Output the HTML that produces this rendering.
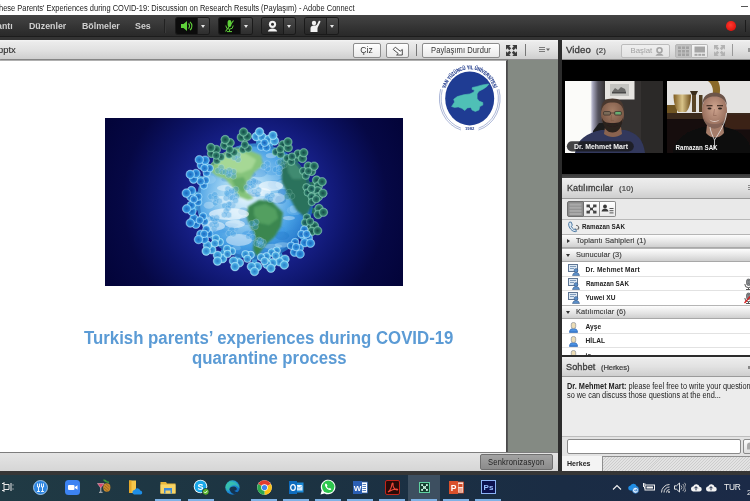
<!DOCTYPE html>
<html><head><meta charset="utf-8">
<style>
*{box-sizing:border-box;margin:0;padding:0}
html,body{width:750px;height:501px;overflow:hidden;background:#2a2a2a;font-family:"Liberation Sans","DejaVu Sans",sans-serif;}
.abs{position:absolute}
#root{will-change:transform;transform:translateZ(0);position:relative;width:750px;height:501px;overflow:hidden;background:#2c2c2c}
#title{left:0;top:0;width:750px;height:15px;background:#fff;color:#1a1a1a;font-size:8.4px;line-height:14px;white-space:nowrap}
#menu{left:0;top:15px;width:750px;height:22px;background:linear-gradient(#434343 0,#3a3a3a 35%,#2e2e2e 75%,#282828 100%);}
.mi{position:absolute;top:0;line-height:21px;font-size:9.4px;font-weight:bold;color:#cfcfcf;white-space:nowrap;transform-origin:0 50%;transform:scaleX(0.94)}
.mb{position:absolute;top:3px;height:16px;width:21px;background:#0c0c0c;border-radius:2px 0 0 2px;box-shadow:0 0 0 1px #1a1a1a}
.md{position:absolute;top:3px;height:16px;width:11px;background:linear-gradient(#4a4a4a,#2e2e2e);border-radius:0 2px 2px 0;box-shadow:0 0 0 1px #1a1a1a}
.md:after{content:"";position:absolute;left:3px;top:7px;border:2.5px solid transparent;border-top:3px solid #e8e8e8}
.tb{position:absolute;top:40px;height:20px;background:linear-gradient(#f4f4f4 0,#ebebeb 12%,#e2e2e2 50%,#cecece 100%);border-bottom:1px solid #8e8e8e}
.btn{position:absolute;border:1px solid #8c8c8c;border-radius:2px;background:linear-gradient(#ffffff,#e9e9e9);font-size:8.6px;color:#333;text-align:center;white-space:nowrap}
.sep{position:absolute;width:1px;background:#777}
.pt{position:absolute;font-size:9.600px;color:#3a3a3a;white-space:nowrap;line-height:19px;top:-0.500px;letter-spacing:0.100px;-webkit-text-stroke:0.300px #3a3a3a;transform-origin:0 50%}
.pc{position:absolute;font-size:7.800px;font-weight:normal;-webkit-text-stroke:0.200px #444;letter-spacing:0.200px;color:#444;white-space:nowrap;line-height:19px;top:0.500px}
.row{position:absolute;left:0;width:188px;height:14px;font-size:6.600px;font-weight:bold;color:#222;line-height:14.500px;white-space:nowrap}
.row span{position:absolute;left:23.500px;top:0;letter-spacing:0.050px;transform-origin:0 50%}
.grp{position:absolute;left:0;width:188px;height:14px;background:linear-gradient(#fdfdfd,#e3e3e3 60%,#cfcfcf);border-top:1px solid #b5b5b5;border-bottom:1px solid #a8a8a8;font-size:7.900px;color:#3c3c3c;line-height:12.500px;white-space:nowrap;letter-spacing:0.100px;-webkit-text-stroke:0.150px #3c3c3c}
.grp span{position:absolute;left:14px;top:0;transform-origin:0 50%;transform:scaleX(0.940)}
</style></head><body>
<div id="root">

<!-- title -->
<div id="title" class="abs"><span class="abs" id="ttext" style="left:-1px;top:1px;transform-origin:0 0;transform:scaleX(0.893)">hese Parents' Experiences during COVID-19: Discussion on Research Results (Paylaşım) - Adobe Connect</span>
<div class="abs" style="left:741px;top:6px;width:7px;height:1px;background:#555"></div></div>
<!-- menu -->
<div id="menu" class="abs">
<span class="mi" style="left:-3px">antı</span>
<span class="mi" style="left:29px">Düzenler</span>
<span class="mi" style="left:82px">Bölmeler</span>
<span class="mi" style="left:135px">Ses</span>
<div class="abs" style="left:164px;top:4px;width:1px;height:14px;background:#222;box-shadow:1px 0 0 #3a3a3a"></div>
<!-- speaker -->
<div class="mb" style="left:176px"><svg width="21" height="16" viewBox="0 0 21 16"><path d="M5 6h2.5l3.5-3v10l-3.5-3H5z" fill="#5fd13a"/><path d="M12.5 5.5a3.5 3.5 0 0 1 0 5M14 3.8a5.6 5.6 0 0 1 0 8.4" fill="none" stroke="#5fd13a" stroke-width="1.1"/></svg></div><div class="md" style="left:198px"></div>
<!-- mic -->
<div class="mb" style="left:219px"><svg width="21" height="16" viewBox="0 0 21 16"><rect x="8.6" y="2" width="3.8" height="7" rx="1.9" fill="#5fd13a"/><path d="M6.8 7.5a3.7 3.7 0 0 0 7.4 0M10.5 11.3v2M8 13.6h5" fill="none" stroke="#5fd13a" stroke-width="1"/><path d="M6.5 13.5L14.5 2.5" stroke="#5fd13a" stroke-width="1.1"/></svg></div><div class="md" style="left:241px"></div>
<!-- webcam -->
<div class="mb" style="left:262px;background:linear-gradient(#3d3d3d,#272727)"><svg width="21" height="16" viewBox="0 0 21 16"><circle cx="10.5" cy="6.3" r="3.6" fill="#f2f2f2"/><circle cx="10.5" cy="6.3" r="1.5" fill="#2c2c2c"/><path d="M5.8 13.4 C6.6 11.4 8.2 10.6 10.5 10.6 C12.8 10.6 14.4 11.4 15.2 13.4 Z" fill="#f2f2f2"/></svg></div><div class="md" style="left:284px"></div>
<!-- hand -->
<div class="mb" style="left:305px;background:linear-gradient(#3d3d3d,#272727)"><svg width="21" height="16" viewBox="0 0 21 16"><circle cx="9" cy="5" r="2.2" fill="#f2f2f2"/><path d="M5.5 14 V10.5 C5.5 8.5 7 7.6 9 7.6 C10.5 7.600 11.4 7.600 12.200 6.200 L14 2.600 L15.600 3.400 L13.600 7.800 C13 9 12.500 9.600 12.500 11 V14 Z" fill="#f2f2f2"/></svg></div><div class="md" style="left:327px"></div>
<div class="abs" style="left:745px;top:4.500px;width:1px;height:12.500px;background:#1b1b1b"></div>
<div class="abs" style="left:726px;top:6px;width:9.600px;height:9.600px;border-radius:50%;background:radial-gradient(circle at 45% 40%,#ff3b30,#e01510 70%,#b80d0a)"></div>
</div>
<div class="abs" style="left:0;top:36px;width:750px;height:1px;background:#1c1c1c"></div><div class="abs" style="left:0;top:37px;width:750px;height:3px;background:#343434"></div>

<!-- share pod -->
<div class="tb" style="left:0;width:558px">
<span class="abs" style="left:-2px;top:0;line-height:20px;font-size:9.400px;color:#333;-webkit-text-stroke:0.150px #333">pptx</span>
<div class="btn" style="left:352.500px;top:3px;width:28px;height:15px;line-height:13px">Çiz</div>
<div class="btn" style="left:386px;top:3px;width:23px;height:15px"><svg width="21" height="13" viewBox="0 0 21 13" style="display:block"><path d="M6.200 5.400 L8.300 3.200 L13.200 7.200 L15.300 5.500 L15.300 11 L9.600 11 L11.300 9.500 Z" fill="#fdfdfd" stroke="#3a3a3a" stroke-width="0.900" stroke-linejoin="round"/></svg></div>
<div class="sep" style="left:416px;top:4px;height:12px"></div>
<div class="btn" style="left:422px;top:3px;width:78px;height:15px;line-height:13px;"><span style="display:inline-block;transform:scaleX(0.880);transform-origin:50% 50%;margin:0 -6px;letter-spacing:0.100px">Paylaşımı Durdur</span></div>
<svg class="abs" style="left:506px;top:5px" width="11" height="11" viewBox="0 0 11 11"><g fill="#3c3c3c"><path d="M0 0h4.700L3.300 1.400 5.200 3.300 3.300 5.200 1.400 3.300 0 4.700z"/><path d="M11 0v4.700L9.600 3.300 7.700 5.200 5.800 3.300 7.700 1.400 6.300 0z"/><path d="M0 11V6.300l1.400 1.400L3.300 5.800 5.200 7.700 3.300 9.600 4.700 11z"/><path d="M11 11H6.300l1.400-1.400L5.800 7.700 7.700 5.800 9.600 7.700 11 6.300z"/></g></svg>
<div class="sep" style="left:525px;top:4px;height:12px"></div>
<svg class="abs" style="left:539px;top:7px" width="11" height="6" viewBox="0 0 11 6"><path d="M0 0.500h6M0 2.500h6M0 4.500h6" stroke="#7a7a7a" stroke-width="1"/><path d="M7 1.500h4L9 4z" fill="#666"/></svg>
</div>
<div class="abs" id="slide" style="left:0;top:60px;width:507px;height:392px;border-top:1px solid #b0b0b0;background:#fff;border-right:1px solid #4a4a4a;box-shadow:1px 0 1px #555"></div>
<div class="abs" style="left:508px;top:60px;width:50px;height:392px;background:#848a83"></div>
<div class="abs" style="left:0;top:452px;width:558px;height:19px;background:linear-gradient(#e4e4e4,#d6d6d6);border-top:1px solid #7d7d7d"></div>
<div class="abs" style="left:480px;top:454px;width:73px;height:15.500px;border:1px solid #6f6f6f;border-radius:2px;background:linear-gradient(#a3a3a3,#8b8b8b);font-size:8.400px;color:#1e1e1e;text-align:center;line-height:14px"><span style="display:inline-block;transform:scaleX(0.900);margin:0 -6px;letter-spacing:0.200px">Senkronizasyon</span></div>
<!-- slide content -->
<div class="abs" id="st1" style="left:84px;top:328.400px;transform:scaleX(0.955);font-size:17.600px;font-weight:bold;color:#5b9bd5;white-space:nowrap;transform-origin:0 0;line-height:20px">Turkish parents’ experiences during COVID-19</div>
<div class="abs" id="st2" style="left:191.500px;top:348.300px;transform:scaleX(0.953);font-size:17.600px;font-weight:bold;color:#5b9bd5;white-space:nowrap;transform-origin:0 0;line-height:20px">quarantine process</div>

<svg class="abs" style="left:105px;top:118px" width="298" height="168" viewBox="0 0 298 168">
<defs>
<radialGradient id="vbg" gradientUnits="userSpaceOnUse" cx="149.9" cy="83.5" r="165"><stop offset="0" stop-color="#2636a6"/><stop offset="0.4" stop-color="#172088"/><stop offset="0.6" stop-color="#0c1366"/><stop offset="0.8" stop-color="#060845"/><stop offset="1" stop-color="#03043a"/></radialGradient>
<radialGradient id="glb" cx="42%" cy="45%" r="62%"><stop offset="0" stop-color="#e8f6fd"/><stop offset="0.3" stop-color="#a9d8f4"/><stop offset="0.7" stop-color="#469fe4"/><stop offset="1" stop-color="#1f6fc6"/></radialGradient>
<radialGradient id="spb" cx="50%" cy="50%" r="55%"><stop offset="0" stop-color="#1c66bc"/><stop offset="0.6" stop-color="#2f8fdc"/><stop offset="1" stop-color="#86d6ff"/></radialGradient>
<radialGradient id="spg" cx="50%" cy="50%" r="55%"><stop offset="0" stop-color="#154a48"/><stop offset="0.6" stop-color="#2c7a68"/><stop offset="1" stop-color="#7cc8a8"/></radialGradient>
<radialGradient id="spc" cx="50%" cy="50%" r="55%"><stop offset="0" stop-color="#2a7cc8"/><stop offset="0.6" stop-color="#45a8e0"/><stop offset="1" stop-color="#a8ecff"/></radialGradient>
<clipPath id="gc"><circle cx="149.9" cy="83.5" r="58"/></clipPath>
<filter id="vb" x="-5%" y="-5%" width="110%" height="110%"><feGaussianBlur stdDeviation="0.55"/></filter>
<filter id="vb3" x="-10%" y="-10%" width="120%" height="120%"><feGaussianBlur stdDeviation="1.1"/></filter>
</defs>
<rect width="298" height="168" fill="url(#vbg)"/>
<g filter="url(#vb)">
<line x1="205.2" y1="92.2" x2="212.0" y2="93.3" stroke="#256b5c" stroke-width="5.5" stroke-linecap="round"/>
<circle cx="214.0" cy="90.5" r="4.3" fill="url(#spg)" stroke="#8fd0bc" stroke-width="0.6" stroke-opacity="0.7" opacity="1.0"/><circle cx="213.1" cy="96.5" r="4.3" fill="url(#spg)" stroke="#8fd0bc" stroke-width="0.6" stroke-opacity="0.7" opacity="1.0"/><circle cx="218.4" cy="94.3" r="4.3" fill="url(#spg)" stroke="#8fd0bc" stroke-width="0.6" stroke-opacity="0.7" opacity="1.0"/>
<line x1="200.7" y1="107.1" x2="206.7" y2="109.9" stroke="#256b5c" stroke-width="5.5" stroke-linecap="round"/>
<circle cx="209.4" cy="107.8" r="4.3" fill="url(#spg)" stroke="#8fd0bc" stroke-width="0.6" stroke-opacity="0.7" opacity="1.0"/><circle cx="206.8" cy="113.4" r="4.3" fill="url(#spg)" stroke="#8fd0bc" stroke-width="0.6" stroke-opacity="0.7" opacity="1.0"/><circle cx="212.6" cy="112.7" r="4.3" fill="url(#spg)" stroke="#8fd0bc" stroke-width="0.6" stroke-opacity="0.7" opacity="1.0"/>
<line x1="194.7" y1="117.1" x2="200.3" y2="121.3" stroke="#3d9ad8" stroke-width="5.5" stroke-linecap="round"/>
<circle cx="203.3" cy="119.8" r="4.3" fill="url(#spb)" stroke="#bdeafc" stroke-width="0.6" stroke-opacity="0.7" opacity="1.0"/><circle cx="199.7" cy="124.7" r="4.3" fill="url(#spb)" stroke="#bdeafc" stroke-width="0.6" stroke-opacity="0.7" opacity="1.0"/><circle cx="205.4" cy="125.2" r="4.3" fill="url(#spb)" stroke="#bdeafc" stroke-width="0.6" stroke-opacity="0.7" opacity="1.0"/>
<line x1="186.4" y1="125.9" x2="190.9" y2="131.1" stroke="#3d9ad8" stroke-width="5.5" stroke-linecap="round"/>
<circle cx="194.2" cy="130.3" r="4.3" fill="url(#spb)" stroke="#bdeafc" stroke-width="0.6" stroke-opacity="0.7" opacity="1.0"/><circle cx="189.6" cy="134.2" r="4.3" fill="url(#spb)" stroke="#bdeafc" stroke-width="0.6" stroke-opacity="0.7" opacity="1.0"/><circle cx="195.1" cy="136.0" r="4.3" fill="url(#spb)" stroke="#bdeafc" stroke-width="0.6" stroke-opacity="0.7" opacity="1.0"/>
<line x1="173.4" y1="134.3" x2="176.6" y2="141.1" stroke="#3d9ad8" stroke-width="5.5" stroke-linecap="round"/>
<circle cx="180.0" cy="141.2" r="4.3" fill="url(#spc)" stroke="#bdeafc" stroke-width="0.6" stroke-opacity="0.7" opacity="1.0"/><circle cx="174.5" cy="143.8" r="4.3" fill="url(#spc)" stroke="#bdeafc" stroke-width="0.6" stroke-opacity="0.7" opacity="1.0"/><circle cx="179.3" cy="147.0" r="4.3" fill="url(#spc)" stroke="#bdeafc" stroke-width="0.6" stroke-opacity="0.7" opacity="1.0"/>
<line x1="162.9" y1="138.0" x2="164.4" y2="144.0" stroke="#3d9ad8" stroke-width="5.5" stroke-linecap="round"/>
<circle cx="167.7" cy="144.9" r="4.3" fill="url(#spc)" stroke="#bdeafc" stroke-width="0.6" stroke-opacity="0.7" opacity="1.0"/><circle cx="161.8" cy="146.3" r="4.3" fill="url(#spc)" stroke="#bdeafc" stroke-width="0.6" stroke-opacity="0.7" opacity="1.0"/><circle cx="165.9" cy="150.3" r="4.3" fill="url(#spc)" stroke="#bdeafc" stroke-width="0.6" stroke-opacity="0.7" opacity="1.0"/>
<line x1="149.5" y1="139.5" x2="149.5" y2="147.0" stroke="#3d9ad8" stroke-width="5.5" stroke-linecap="round"/>
<circle cx="152.5" cy="148.6" r="4.3" fill="url(#spc)" stroke="#bdeafc" stroke-width="0.6" stroke-opacity="0.7" opacity="1.0"/><circle cx="146.4" cy="148.6" r="4.3" fill="url(#spc)" stroke="#bdeafc" stroke-width="0.6" stroke-opacity="0.7" opacity="1.0"/><circle cx="149.5" cy="153.5" r="4.3" fill="url(#spc)" stroke="#bdeafc" stroke-width="0.6" stroke-opacity="0.7" opacity="1.0"/>
<line x1="133.5" y1="137.1" x2="131.9" y2="142.4" stroke="#3d9ad8" stroke-width="5.5" stroke-linecap="round"/>
<circle cx="134.4" cy="144.8" r="4.3" fill="url(#spc)" stroke="#bdeafc" stroke-width="0.6" stroke-opacity="0.7" opacity="1.0"/><circle cx="128.5" cy="143.0" r="4.3" fill="url(#spc)" stroke="#bdeafc" stroke-width="0.6" stroke-opacity="0.7" opacity="1.0"/><circle cx="130.0" cy="148.6" r="4.3" fill="url(#spc)" stroke="#bdeafc" stroke-width="0.6" stroke-opacity="0.7" opacity="1.0"/>
<line x1="120.1" y1="130.9" x2="115.9" y2="137.6" stroke="#3d9ad8" stroke-width="5.5" stroke-linecap="round"/>
<circle cx="117.6" cy="140.6" r="4.3" fill="url(#spc)" stroke="#bdeafc" stroke-width="0.6" stroke-opacity="0.7" opacity="1.0"/><circle cx="112.5" cy="137.3" r="4.3" fill="url(#spc)" stroke="#bdeafc" stroke-width="0.6" stroke-opacity="0.7" opacity="1.0"/><circle cx="112.5" cy="143.1" r="4.3" fill="url(#spc)" stroke="#bdeafc" stroke-width="0.6" stroke-opacity="0.7" opacity="1.0"/>
<line x1="110.7" y1="123.5" x2="105.7" y2="128.5" stroke="#3d9ad8" stroke-width="5.5" stroke-linecap="round"/>
<circle cx="106.8" cy="131.7" r="4.3" fill="url(#spc)" stroke="#bdeafc" stroke-width="0.6" stroke-opacity="0.7" opacity="1.0"/><circle cx="102.5" cy="127.4" r="4.3" fill="url(#spc)" stroke="#bdeafc" stroke-width="0.6" stroke-opacity="0.7" opacity="1.0"/><circle cx="101.2" cy="133.1" r="4.3" fill="url(#spc)" stroke="#bdeafc" stroke-width="0.6" stroke-opacity="0.7" opacity="1.0"/>
<line x1="103.4" y1="114.8" x2="98.8" y2="117.9" stroke="#3d9ad8" stroke-width="5.5" stroke-linecap="round"/>
<circle cx="99.3" cy="121.3" r="4.3" fill="url(#spb)" stroke="#bdeafc" stroke-width="0.6" stroke-opacity="0.7" opacity="1.0"/><circle cx="95.9" cy="116.2" r="4.3" fill="url(#spb)" stroke="#bdeafc" stroke-width="0.6" stroke-opacity="0.7" opacity="1.0"/><circle cx="93.5" cy="121.5" r="4.3" fill="url(#spb)" stroke="#bdeafc" stroke-width="0.6" stroke-opacity="0.7" opacity="1.0"/>
<line x1="96.8" y1="101.2" x2="91.4" y2="103.0" stroke="#3d9ad8" stroke-width="5.5" stroke-linecap="round"/>
<circle cx="90.9" cy="106.3" r="4.3" fill="url(#spb)" stroke="#bdeafc" stroke-width="0.6" stroke-opacity="0.7" opacity="1.0"/><circle cx="89.0" cy="100.5" r="4.3" fill="url(#spb)" stroke="#bdeafc" stroke-width="0.6" stroke-opacity="0.7" opacity="1.0"/><circle cx="85.3" cy="105.0" r="4.3" fill="url(#spb)" stroke="#bdeafc" stroke-width="0.6" stroke-opacity="0.7" opacity="1.0"/>
<line x1="94.2" y1="89.4" x2="88.1" y2="90.1" stroke="#3d9ad8" stroke-width="5.5" stroke-linecap="round"/>
<circle cx="86.9" cy="93.3" r="4.3" fill="url(#spb)" stroke="#bdeafc" stroke-width="0.6" stroke-opacity="0.7" opacity="1.0"/><circle cx="86.3" cy="87.2" r="4.3" fill="url(#spb)" stroke="#bdeafc" stroke-width="0.6" stroke-opacity="0.7" opacity="1.0"/><circle cx="81.7" cy="90.8" r="4.3" fill="url(#spb)" stroke="#bdeafc" stroke-width="0.6" stroke-opacity="0.7" opacity="1.0"/>
<line x1="94.3" y1="76.7" x2="87.7" y2="75.8" stroke="#3d9ad8" stroke-width="5.5" stroke-linecap="round"/>
<circle cx="85.8" cy="78.7" r="4.3" fill="url(#spb)" stroke="#bdeafc" stroke-width="0.6" stroke-opacity="0.7" opacity="1.0"/><circle cx="86.5" cy="72.6" r="4.3" fill="url(#spb)" stroke="#bdeafc" stroke-width="0.6" stroke-opacity="0.7" opacity="1.0"/><circle cx="81.3" cy="75.1" r="4.3" fill="url(#spb)" stroke="#bdeafc" stroke-width="0.6" stroke-opacity="0.7" opacity="1.0"/>
<line x1="98.3" y1="61.9" x2="91.2" y2="58.9" stroke="#3d9ad8" stroke-width="5.5" stroke-linecap="round"/>
<circle cx="88.6" cy="61.1" r="4.3" fill="url(#spb)" stroke="#bdeafc" stroke-width="0.6" stroke-opacity="0.7" opacity="1.0"/><circle cx="91.0" cy="55.5" r="4.3" fill="url(#spb)" stroke="#bdeafc" stroke-width="0.6" stroke-opacity="0.7" opacity="1.0"/><circle cx="85.3" cy="56.4" r="4.3" fill="url(#spb)" stroke="#bdeafc" stroke-width="0.6" stroke-opacity="0.7" opacity="1.0"/>
<line x1="105.1" y1="49.8" x2="99.5" y2="45.6" stroke="#3d9ad8" stroke-width="5.5" stroke-linecap="round"/>
<circle cx="96.4" cy="47.1" r="4.3" fill="url(#spb)" stroke="#bdeafc" stroke-width="0.6" stroke-opacity="0.7" opacity="1.0"/><circle cx="100.1" cy="42.2" r="4.3" fill="url(#spb)" stroke="#bdeafc" stroke-width="0.6" stroke-opacity="0.7" opacity="1.0"/><circle cx="94.3" cy="41.7" r="4.3" fill="url(#spb)" stroke="#bdeafc" stroke-width="0.6" stroke-opacity="0.7" opacity="1.0"/>
<line x1="114.4" y1="40.2" x2="109.9" y2="34.6" stroke="#256b5c" stroke-width="5.5" stroke-linecap="round"/>
<circle cx="106.6" cy="35.4" r="4.3" fill="url(#spg)" stroke="#8fd0bc" stroke-width="0.6" stroke-opacity="0.7" opacity="1.0"/><circle cx="111.3" cy="31.5" r="4.3" fill="url(#spg)" stroke="#8fd0bc" stroke-width="0.6" stroke-opacity="0.7" opacity="1.0"/><circle cx="105.8" cy="29.6" r="4.3" fill="url(#spg)" stroke="#8fd0bc" stroke-width="0.6" stroke-opacity="0.7" opacity="1.0"/>
<line x1="125.7" y1="33.0" x2="123.0" y2="27.4" stroke="#256b5c" stroke-width="5.5" stroke-linecap="round"/>
<circle cx="119.6" cy="27.3" r="4.3" fill="url(#spg)" stroke="#8fd0bc" stroke-width="0.6" stroke-opacity="0.7" opacity="1.0"/><circle cx="125.1" cy="24.7" r="4.3" fill="url(#spg)" stroke="#8fd0bc" stroke-width="0.6" stroke-opacity="0.7" opacity="1.0"/><circle cx="120.2" cy="21.6" r="4.3" fill="url(#spg)" stroke="#8fd0bc" stroke-width="0.6" stroke-opacity="0.7" opacity="1.0"/>
<line x1="140.8" y1="28.2" x2="139.5" y2="20.4" stroke="#256b5c" stroke-width="5.5" stroke-linecap="round"/>
<circle cx="136.3" cy="19.3" r="4.3" fill="url(#spg)" stroke="#8fd0bc" stroke-width="0.6" stroke-opacity="0.7" opacity="1.0"/><circle cx="142.3" cy="18.3" r="4.3" fill="url(#spg)" stroke="#8fd0bc" stroke-width="0.6" stroke-opacity="0.7" opacity="1.0"/><circle cx="138.5" cy="14.0" r="4.3" fill="url(#spg)" stroke="#8fd0bc" stroke-width="0.6" stroke-opacity="0.7" opacity="1.0"/>
<line x1="153.6" y1="27.6" x2="154.1" y2="20.4" stroke="#3d9ad8" stroke-width="5.5" stroke-linecap="round"/>
<circle cx="151.2" cy="18.6" r="4.3" fill="url(#spc)" stroke="#bdeafc" stroke-width="0.6" stroke-opacity="0.7" opacity="1.0"/><circle cx="157.2" cy="19.0" r="4.3" fill="url(#spc)" stroke="#bdeafc" stroke-width="0.6" stroke-opacity="0.7" opacity="1.0"/><circle cx="154.5" cy="13.9" r="4.3" fill="url(#spc)" stroke="#bdeafc" stroke-width="0.6" stroke-opacity="0.7" opacity="1.0"/>
<line x1="164.6" y1="29.5" x2="166.2" y2="23.6" stroke="#3d9ad8" stroke-width="5.5" stroke-linecap="round"/>
<circle cx="163.7" cy="21.3" r="4.3" fill="url(#spc)" stroke="#bdeafc" stroke-width="0.6" stroke-opacity="0.7" opacity="1.0"/><circle cx="169.6" cy="22.9" r="4.3" fill="url(#spc)" stroke="#bdeafc" stroke-width="0.6" stroke-opacity="0.7" opacity="1.0"/><circle cx="167.9" cy="17.4" r="4.3" fill="url(#spc)" stroke="#bdeafc" stroke-width="0.6" stroke-opacity="0.7" opacity="1.0"/>
<line x1="177.0" y1="34.5" x2="179.8" y2="29.5" stroke="#256b5c" stroke-width="5.5" stroke-linecap="round"/>
<circle cx="177.9" cy="26.7" r="4.3" fill="url(#spg)" stroke="#8fd0bc" stroke-width="0.6" stroke-opacity="0.7" opacity="1.0"/><circle cx="183.2" cy="29.7" r="4.3" fill="url(#spg)" stroke="#8fd0bc" stroke-width="0.6" stroke-opacity="0.7" opacity="1.0"/><circle cx="182.9" cy="23.9" r="4.3" fill="url(#spg)" stroke="#8fd0bc" stroke-width="0.6" stroke-opacity="0.7" opacity="1.0"/>
<line x1="189.5" y1="43.9" x2="194.1" y2="39.3" stroke="#256b5c" stroke-width="5.5" stroke-linecap="round"/>
<circle cx="193.0" cy="36.0" r="4.3" fill="url(#spg)" stroke="#8fd0bc" stroke-width="0.6" stroke-opacity="0.7" opacity="1.0"/><circle cx="197.4" cy="40.4" r="4.3" fill="url(#spg)" stroke="#8fd0bc" stroke-width="0.6" stroke-opacity="0.7" opacity="1.0"/><circle cx="198.7" cy="34.7" r="4.3" fill="url(#spg)" stroke="#8fd0bc" stroke-width="0.6" stroke-opacity="0.7" opacity="1.0"/>
<line x1="198.0" y1="54.8" x2="203.6" y2="51.5" stroke="#256b5c" stroke-width="5.5" stroke-linecap="round"/>
<circle cx="203.3" cy="48.1" r="4.3" fill="url(#spg)" stroke="#8fd0bc" stroke-width="0.6" stroke-opacity="0.7" opacity="1.0"/><circle cx="206.5" cy="53.4" r="4.3" fill="url(#spg)" stroke="#8fd0bc" stroke-width="0.6" stroke-opacity="0.7" opacity="1.0"/><circle cx="209.1" cy="48.2" r="4.3" fill="url(#spg)" stroke="#8fd0bc" stroke-width="0.6" stroke-opacity="0.7" opacity="1.0"/>
<line x1="203.6" y1="67.7" x2="210.9" y2="65.5" stroke="#256b5c" stroke-width="5.5" stroke-linecap="round"/>
<circle cx="211.6" cy="62.1" r="4.3" fill="url(#spg)" stroke="#8fd0bc" stroke-width="0.6" stroke-opacity="0.7" opacity="1.0"/><circle cx="213.3" cy="68.0" r="4.3" fill="url(#spg)" stroke="#8fd0bc" stroke-width="0.6" stroke-opacity="0.7" opacity="1.0"/><circle cx="217.1" cy="63.7" r="4.3" fill="url(#spg)" stroke="#8fd0bc" stroke-width="0.6" stroke-opacity="0.7" opacity="1.0"/>
<line x1="205.5" y1="76.7" x2="211.5" y2="76.0" stroke="#256b5c" stroke-width="5.5" stroke-linecap="round"/>
<circle cx="212.6" cy="72.8" r="4.3" fill="url(#spg)" stroke="#8fd0bc" stroke-width="0.6" stroke-opacity="0.7" opacity="1.0"/><circle cx="213.4" cy="78.8" r="4.3" fill="url(#spg)" stroke="#8fd0bc" stroke-width="0.6" stroke-opacity="0.7" opacity="1.0"/><circle cx="217.9" cy="75.2" r="4.3" fill="url(#spg)" stroke="#8fd0bc" stroke-width="0.6" stroke-opacity="0.7" opacity="1.0"/>
<circle cx="149.9" cy="83.5" r="58" fill="url(#glb)"/>
<g clip-path="url(#gc)">
<ellipse cx="182.3" cy="63.0" rx="9.9" ry="3.2" fill="#2f8ad6" opacity="0.30"/>
<ellipse cx="164.5" cy="127.1" rx="6.0" ry="2.9" fill="#2f8ad6" opacity="0.39"/>
<ellipse cx="150.9" cy="64.3" rx="5.5" ry="2.3" fill="#2f8ad6" opacity="0.28"/>
<ellipse cx="103.8" cy="87.3" rx="5.1" ry="3.5" fill="#ffffff" opacity="0.27"/>
<ellipse cx="123.7" cy="107.0" rx="9.9" ry="2.0" fill="#3a96e4" opacity="0.25"/>
<ellipse cx="169.2" cy="66.5" rx="6.4" ry="4.6" fill="#3a96e4" opacity="0.20"/>
<ellipse cx="175.7" cy="81.8" rx="5.5" ry="4.3" fill="#1f74c4" opacity="0.36"/>
<ellipse cx="138.4" cy="93.5" rx="5.3" ry="3.9" fill="#2f8ad6" opacity="0.31"/>
<ellipse cx="123.8" cy="110.7" rx="9.8" ry="3.5" fill="#3a96e4" opacity="0.21"/>
<ellipse cx="116.4" cy="112.6" rx="5.9" ry="2.7" fill="#3a96e4" opacity="0.23"/>
<ellipse cx="167.7" cy="128.3" rx="9.6" ry="2.6" fill="#bfe4f8" opacity="0.37"/>
<ellipse cx="121.0" cy="61.5" rx="4.6" ry="2.1" fill="#1f74c4" opacity="0.23"/>
<ellipse cx="141.9" cy="56.3" rx="8.9" ry="3.8" fill="#1f74c4" opacity="0.29"/>
<ellipse cx="199.9" cy="59.7" rx="4.8" ry="3.4" fill="#3a96e4" opacity="0.32"/>
<ellipse cx="139.8" cy="136.2" rx="5.2" ry="2.0" fill="#1f74c4" opacity="0.27"/>
<ellipse cx="150.0" cy="95.6" rx="5.7" ry="3.6" fill="#ffffff" opacity="0.20"/>
<ellipse cx="174.1" cy="112.2" rx="6.0" ry="4.2" fill="#3a96e4" opacity="0.31"/>
<ellipse cx="156.6" cy="91.6" rx="4.1" ry="4.7" fill="#1f74c4" opacity="0.39"/>
<ellipse cx="194.2" cy="89.4" rx="6.9" ry="4.2" fill="#1f74c4" opacity="0.21"/>
<ellipse cx="183.8" cy="100.1" rx="6.2" ry="2.1" fill="#ffffff" opacity="0.35"/>
<ellipse cx="178.5" cy="66.6" rx="8.1" ry="4.7" fill="#bfe4f8" opacity="0.39"/>
<ellipse cx="188.8" cy="91.0" rx="4.1" ry="4.0" fill="#bfe4f8" opacity="0.31"/>
<ellipse cx="137.6" cy="73.5" rx="7.8" ry="5.0" fill="#bfe4f8" opacity="0.34"/>
<ellipse cx="113.2" cy="114.5" rx="7.5" ry="3.3" fill="#3a96e4" opacity="0.20"/>
<ellipse cx="149.9" cy="73.8" rx="7.6" ry="3.4" fill="#ffffff" opacity="0.39"/>
<ellipse cx="187.4" cy="115.7" rx="8.0" ry="3.5" fill="#2f8ad6" opacity="0.26"/>
<ellipse cx="177.1" cy="117.8" rx="7.1" ry="4.3" fill="#1f74c4" opacity="0.33"/>
<ellipse cx="100.5" cy="102.4" rx="6.0" ry="4.0" fill="#ffffff" opacity="0.32"/>
<ellipse cx="166.0" cy="37.6" rx="5.2" ry="2.6" fill="#ffffff" opacity="0.31"/>
<ellipse cx="141.5" cy="102.4" rx="7.0" ry="4.5" fill="#2f8ad6" opacity="0.34"/>
<ellipse cx="177.9" cy="74.4" rx="5.0" ry="3.4" fill="#1f74c4" opacity="0.38"/>
<ellipse cx="166.8" cy="53.2" rx="7.1" ry="4.0" fill="#3a96e4" opacity="0.28"/>
<ellipse cx="158.8" cy="88.0" rx="9.2" ry="2.1" fill="#1f74c4" opacity="0.31"/>
<ellipse cx="131.8" cy="129.9" rx="4.1" ry="2.4" fill="#bfe4f8" opacity="0.22"/>
<ellipse cx="153.4" cy="54.8" rx="8.7" ry="4.4" fill="#2f8ad6" opacity="0.28"/>
<ellipse cx="118.9" cy="50.5" rx="8.8" ry="4.9" fill="#ffffff" opacity="0.22"/>
<ellipse cx="126.5" cy="87.2" rx="4.1" ry="3.4" fill="#2f8ad6" opacity="0.22"/>
<ellipse cx="145.3" cy="116.1" rx="8.2" ry="3.6" fill="#3a96e4" opacity="0.40"/>
<ellipse cx="177.8" cy="126.9" rx="8.2" ry="2.7" fill="#bfe4f8" opacity="0.39"/>
<ellipse cx="146.4" cy="63.6" rx="6.7" ry="3.9" fill="#2f8ad6" opacity="0.26"/>
<ellipse cx="102.2" cy="61.5" rx="8.8" ry="4.8" fill="#bfe4f8" opacity="0.25"/>
<ellipse cx="167.4" cy="81.5" rx="9.2" ry="4.4" fill="#2f8ad6" opacity="0.23"/>
<ellipse cx="194.8" cy="50.9" rx="9.9" ry="3.6" fill="#1f74c4" opacity="0.24"/>
<ellipse cx="148.5" cy="76.6" rx="7.0" ry="2.1" fill="#1f74c4" opacity="0.30"/>
<ellipse cx="154.4" cy="44.7" rx="4.2" ry="4.4" fill="#2f8ad6" opacity="0.27"/>
<ellipse cx="189.8" cy="92.4" rx="8.1" ry="4.7" fill="#bfe4f8" opacity="0.21"/>
<g filter="url(#vb3)">
<path d="M104 44 L110 33 L124 29 L141 32 L155 38 L157 47 L149 53 L144 61 L137 66 L140 74 L147 80 L143 81 L133 77 L127 67 L121 60 L112 57 L106 52 Z" fill="#86c47c" stroke="#86c47c" stroke-width="2.0" stroke-linejoin="round" opacity="1.0"/>
<path d="M112 42 L124 34 L140 36 L150 42 L146 50 L136 54 L124 52 L114 48 Z" fill="#aedd9c" stroke="#aedd9c" stroke-width="2.0" stroke-linejoin="round" opacity="0.8"/>
<path d="M128 62 L138 60 L142 68 L138 74 L132 70 Z" fill="#5fa864" stroke="#5fa864" stroke-width="2.0" stroke-linejoin="round" opacity="0.8"/>
<path d="M144 89 L154 83 L166 84 L177 95 L175 108 L169 118 L160 126 L152 137 L149 131 L151 118 L147 109 L143 100 Z" fill="#3a8650" stroke="#3a8650" stroke-width="2.0" stroke-linejoin="round" opacity="1.0"/>
<path d="M150 90 L160 87 L170 92 L172 100 L164 106 L155 104 L150 97 Z" fill="#5aa866" stroke="#5aa866" stroke-width="2.0" stroke-linejoin="round" opacity="0.75"/>
<path d="M177 47 L185 36 L195 38 L203 50 L208 69 L206 87 L200 98 L192 91 L185 78 L178 64 Z" fill="#2b725c" stroke="#2b725c" stroke-width="2.0" stroke-linejoin="round" opacity="1.0"/>
<path d="M183 46 L190 44 L196 52 L196 60 L188 60 L184 54 Z" fill="#4a967a" stroke="#4a967a" stroke-width="2.0" stroke-linejoin="round" opacity="0.7"/>
</g>
<ellipse cx="124" cy="96" rx="20" ry="6" fill="#ffffff" opacity="0.6"/>
<ellipse cx="108" cy="108" rx="12" ry="5" fill="#ffffff" opacity="0.5"/>
<ellipse cx="166" cy="68" rx="12" ry="5" fill="#ffffff" opacity="0.55"/>
<ellipse cx="134" cy="122" rx="13" ry="6" fill="#ffffff" opacity="0.45"/>
<ellipse cx="172" cy="80" rx="8" ry="5" fill="#ffffff" opacity="0.4"/>
<ellipse cx="116" cy="82" rx="9" ry="4" fill="#ffffff" opacity="0.45"/>
<ellipse cx="130" cy="106" rx="10" ry="4" fill="#ffffff" opacity="0.5"/>
<ellipse cx="158" cy="74" rx="8" ry="4" fill="#ffffff" opacity="0.5"/>
<ellipse cx="120" cy="70" rx="8" ry="3" fill="#ffffff" opacity="0.4"/>
<circle cx="106.0" cy="78.6" r="3.2" fill="#3f9ee0" stroke="#e6f7ff" stroke-width="0.8" stroke-opacity="0.7" opacity="0.38"/><circle cx="109.8" cy="81.0" r="3.2" fill="#3f9ee0" stroke="#e6f7ff" stroke-width="0.8" stroke-opacity="0.7" opacity="0.38"/><circle cx="109.8" cy="76.7" r="3.2" fill="#3f9ee0" stroke="#e6f7ff" stroke-width="0.8" stroke-opacity="0.7" opacity="0.38"/>
<circle cx="133.1" cy="41.5" r="3.2" fill="#3f9ee0" stroke="#e6f7ff" stroke-width="0.8" stroke-opacity="0.7" opacity="0.38"/><circle cx="132.8" cy="36.9" r="3.2" fill="#3f9ee0" stroke="#e6f7ff" stroke-width="0.8" stroke-opacity="0.7" opacity="0.38"/><circle cx="129.3" cy="39.4" r="3.2" fill="#3f9ee0" stroke="#e6f7ff" stroke-width="0.8" stroke-opacity="0.7" opacity="0.38"/>
<circle cx="167.0" cy="77.4" r="3.2" fill="#3f9ee0" stroke="#e6f7ff" stroke-width="0.8" stroke-opacity="0.7" opacity="0.38"/><circle cx="162.6" cy="78.2" r="3.2" fill="#3f9ee0" stroke="#e6f7ff" stroke-width="0.8" stroke-opacity="0.7" opacity="0.38"/><circle cx="165.4" cy="81.4" r="3.2" fill="#3f9ee0" stroke="#e6f7ff" stroke-width="0.8" stroke-opacity="0.7" opacity="0.38"/>
<circle cx="121.1" cy="80.1" r="3.2" fill="#3f9ee0" stroke="#e6f7ff" stroke-width="0.8" stroke-opacity="0.7" opacity="0.38"/><circle cx="125.6" cy="79.5" r="3.2" fill="#3f9ee0" stroke="#e6f7ff" stroke-width="0.8" stroke-opacity="0.7" opacity="0.38"/><circle cx="122.9" cy="76.1" r="3.2" fill="#3f9ee0" stroke="#e6f7ff" stroke-width="0.8" stroke-opacity="0.7" opacity="0.38"/>
<circle cx="124.6" cy="55.5" r="3.2" fill="#3f9ee0" stroke="#e6f7ff" stroke-width="0.8" stroke-opacity="0.7" opacity="0.38"/><circle cx="128.4" cy="58.0" r="3.2" fill="#3f9ee0" stroke="#e6f7ff" stroke-width="0.8" stroke-opacity="0.7" opacity="0.38"/><circle cx="128.5" cy="53.7" r="3.2" fill="#3f9ee0" stroke="#e6f7ff" stroke-width="0.8" stroke-opacity="0.7" opacity="0.38"/>
<circle cx="126.0" cy="74.4" r="3.2" fill="#3f9ee0" stroke="#e6f7ff" stroke-width="0.8" stroke-opacity="0.7" opacity="0.38"/><circle cx="122.9" cy="71.0" r="3.2" fill="#3f9ee0" stroke="#e6f7ff" stroke-width="0.8" stroke-opacity="0.7" opacity="0.38"/><circle cx="121.8" cy="75.2" r="3.2" fill="#3f9ee0" stroke="#e6f7ff" stroke-width="0.8" stroke-opacity="0.7" opacity="0.38"/>
<circle cx="178.1" cy="43.7" r="3.2" fill="#3f9ee0" stroke="#e6f7ff" stroke-width="0.8" stroke-opacity="0.7" opacity="0.38"/><circle cx="173.7" cy="44.9" r="3.2" fill="#3f9ee0" stroke="#e6f7ff" stroke-width="0.8" stroke-opacity="0.7" opacity="0.38"/><circle cx="176.9" cy="47.8" r="3.2" fill="#3f9ee0" stroke="#e6f7ff" stroke-width="0.8" stroke-opacity="0.7" opacity="0.38"/>
<circle cx="178.9" cy="47.0" r="3.2" fill="#2d7a66" stroke="#a8e0cc" stroke-width="0.8" stroke-opacity="0.7" opacity="0.38"/><circle cx="179.5" cy="42.5" r="3.2" fill="#2d7a66" stroke="#a8e0cc" stroke-width="0.8" stroke-opacity="0.7" opacity="0.38"/><circle cx="175.6" cy="44.2" r="3.2" fill="#2d7a66" stroke="#a8e0cc" stroke-width="0.8" stroke-opacity="0.7" opacity="0.38"/>
<circle cx="129.7" cy="75.8" r="3.2" fill="#3f9ee0" stroke="#e6f7ff" stroke-width="0.8" stroke-opacity="0.7" opacity="0.38"/><circle cx="130.7" cy="71.4" r="3.2" fill="#3f9ee0" stroke="#e6f7ff" stroke-width="0.8" stroke-opacity="0.7" opacity="0.38"/><circle cx="126.6" cy="72.8" r="3.2" fill="#3f9ee0" stroke="#e6f7ff" stroke-width="0.8" stroke-opacity="0.7" opacity="0.38"/>
<circle cx="111.2" cy="80.4" r="3.2" fill="#3f9ee0" stroke="#e6f7ff" stroke-width="0.8" stroke-opacity="0.7" opacity="0.38"/><circle cx="110.4" cy="84.8" r="3.2" fill="#3f9ee0" stroke="#e6f7ff" stroke-width="0.8" stroke-opacity="0.7" opacity="0.38"/><circle cx="114.4" cy="83.2" r="3.2" fill="#3f9ee0" stroke="#e6f7ff" stroke-width="0.8" stroke-opacity="0.7" opacity="0.38"/>
<circle cx="186.7" cy="78.1" r="3.2" fill="#2d7a66" stroke="#a8e0cc" stroke-width="0.8" stroke-opacity="0.7" opacity="0.38"/><circle cx="184.1" cy="74.4" r="3.2" fill="#2d7a66" stroke="#a8e0cc" stroke-width="0.8" stroke-opacity="0.7" opacity="0.38"/><circle cx="182.4" cy="78.4" r="3.2" fill="#2d7a66" stroke="#a8e0cc" stroke-width="0.8" stroke-opacity="0.7" opacity="0.38"/>
<circle cx="162.5" cy="50.6" r="3.2" fill="#3f9ee0" stroke="#e6f7ff" stroke-width="0.8" stroke-opacity="0.7" opacity="0.38"/><circle cx="162.2" cy="46.0" r="3.2" fill="#3f9ee0" stroke="#e6f7ff" stroke-width="0.8" stroke-opacity="0.7" opacity="0.38"/><circle cx="158.7" cy="48.5" r="3.2" fill="#3f9ee0" stroke="#e6f7ff" stroke-width="0.8" stroke-opacity="0.7" opacity="0.38"/>
<circle cx="144.9" cy="72.6" r="3.2" fill="#3f9ee0" stroke="#e6f7ff" stroke-width="0.8" stroke-opacity="0.7" opacity="0.38"/><circle cx="146.0" cy="68.2" r="3.2" fill="#3f9ee0" stroke="#e6f7ff" stroke-width="0.8" stroke-opacity="0.7" opacity="0.38"/><circle cx="141.9" cy="69.5" r="3.2" fill="#3f9ee0" stroke="#e6f7ff" stroke-width="0.8" stroke-opacity="0.7" opacity="0.38"/>
<circle cx="107.1" cy="106.6" r="3.2" fill="#3f9ee0" stroke="#e6f7ff" stroke-width="0.8" stroke-opacity="0.7" opacity="0.38"/><circle cx="109.2" cy="110.6" r="3.2" fill="#3f9ee0" stroke="#e6f7ff" stroke-width="0.8" stroke-opacity="0.7" opacity="0.38"/><circle cx="111.4" cy="106.9" r="3.2" fill="#3f9ee0" stroke="#e6f7ff" stroke-width="0.8" stroke-opacity="0.7" opacity="0.38"/>
<circle cx="146.9" cy="115.2" r="3.2" fill="#3f9ee0" stroke="#e6f7ff" stroke-width="0.8" stroke-opacity="0.7" opacity="0.38"/><circle cx="143.6" cy="118.4" r="3.2" fill="#3f9ee0" stroke="#e6f7ff" stroke-width="0.8" stroke-opacity="0.7" opacity="0.38"/><circle cx="147.8" cy="119.4" r="3.2" fill="#3f9ee0" stroke="#e6f7ff" stroke-width="0.8" stroke-opacity="0.7" opacity="0.38"/>
<circle cx="107.4" cy="100.1" r="3.2" fill="#3f9ee0" stroke="#e6f7ff" stroke-width="0.8" stroke-opacity="0.7" opacity="0.38"/><circle cx="110.0" cy="103.7" r="3.2" fill="#3f9ee0" stroke="#e6f7ff" stroke-width="0.8" stroke-opacity="0.7" opacity="0.38"/><circle cx="111.7" cy="99.8" r="3.2" fill="#3f9ee0" stroke="#e6f7ff" stroke-width="0.8" stroke-opacity="0.7" opacity="0.38"/>
<circle cx="123.9" cy="86.1" r="3.2" fill="#3f9ee0" stroke="#e6f7ff" stroke-width="0.8" stroke-opacity="0.7" opacity="0.38"/><circle cx="119.6" cy="87.7" r="3.2" fill="#3f9ee0" stroke="#e6f7ff" stroke-width="0.8" stroke-opacity="0.7" opacity="0.38"/><circle cx="123.1" cy="90.3" r="3.2" fill="#3f9ee0" stroke="#e6f7ff" stroke-width="0.8" stroke-opacity="0.7" opacity="0.38"/>
<circle cx="116.2" cy="49.5" r="3.2" fill="#3f9ee0" stroke="#e6f7ff" stroke-width="0.8" stroke-opacity="0.7" opacity="0.38"/><circle cx="112.9" cy="52.7" r="3.2" fill="#3f9ee0" stroke="#e6f7ff" stroke-width="0.8" stroke-opacity="0.7" opacity="0.38"/><circle cx="117.1" cy="53.8" r="3.2" fill="#3f9ee0" stroke="#e6f7ff" stroke-width="0.8" stroke-opacity="0.7" opacity="0.38"/>
<circle cx="153.6" cy="72.1" r="3.2" fill="#3f9ee0" stroke="#e6f7ff" stroke-width="0.8" stroke-opacity="0.7" opacity="0.38"/><circle cx="149.3" cy="73.6" r="3.2" fill="#3f9ee0" stroke="#e6f7ff" stroke-width="0.8" stroke-opacity="0.7" opacity="0.38"/><circle cx="152.7" cy="76.3" r="3.2" fill="#3f9ee0" stroke="#e6f7ff" stroke-width="0.8" stroke-opacity="0.7" opacity="0.38"/>
<circle cx="158.1" cy="124.2" r="3.2" fill="#3f9ee0" stroke="#e6f7ff" stroke-width="0.8" stroke-opacity="0.7" opacity="0.38"/><circle cx="154.0" cy="122.2" r="3.2" fill="#3f9ee0" stroke="#e6f7ff" stroke-width="0.8" stroke-opacity="0.7" opacity="0.38"/><circle cx="154.5" cy="126.5" r="3.2" fill="#3f9ee0" stroke="#e6f7ff" stroke-width="0.8" stroke-opacity="0.7" opacity="0.38"/>
<circle cx="126.8" cy="111.8" r="3.2" fill="#3f9ee0" stroke="#e6f7ff" stroke-width="0.8" stroke-opacity="0.7" opacity="0.38"/><circle cx="124.0" cy="115.4" r="3.2" fill="#3f9ee0" stroke="#e6f7ff" stroke-width="0.8" stroke-opacity="0.7" opacity="0.38"/><circle cx="128.3" cy="115.9" r="3.2" fill="#3f9ee0" stroke="#e6f7ff" stroke-width="0.8" stroke-opacity="0.7" opacity="0.38"/>
<circle cx="148.3" cy="67.6" r="3.2" fill="#3f9ee0" stroke="#e6f7ff" stroke-width="0.8" stroke-opacity="0.7" opacity="0.38"/><circle cx="148.6" cy="63.1" r="3.2" fill="#3f9ee0" stroke="#e6f7ff" stroke-width="0.8" stroke-opacity="0.7" opacity="0.38"/><circle cx="144.8" cy="65.1" r="3.2" fill="#3f9ee0" stroke="#e6f7ff" stroke-width="0.8" stroke-opacity="0.7" opacity="0.38"/>
<circle cx="150.2" cy="108.5" r="3.2" fill="#3f9ee0" stroke="#e6f7ff" stroke-width="0.8" stroke-opacity="0.7" opacity="0.38"/><circle cx="151.0" cy="104.1" r="3.2" fill="#3f9ee0" stroke="#e6f7ff" stroke-width="0.8" stroke-opacity="0.7" opacity="0.38"/><circle cx="147.0" cy="105.6" r="3.2" fill="#3f9ee0" stroke="#e6f7ff" stroke-width="0.8" stroke-opacity="0.7" opacity="0.38"/>
<circle cx="123.6" cy="96.9" r="3.2" fill="#3f9ee0" stroke="#e6f7ff" stroke-width="0.8" stroke-opacity="0.7" opacity="0.38"/><circle cx="121.2" cy="93.0" r="3.2" fill="#3f9ee0" stroke="#e6f7ff" stroke-width="0.8" stroke-opacity="0.7" opacity="0.38"/><circle cx="119.3" cy="96.8" r="3.2" fill="#3f9ee0" stroke="#e6f7ff" stroke-width="0.8" stroke-opacity="0.7" opacity="0.38"/>
<circle cx="131.6" cy="78.3" r="3.2" fill="#3f9ee0" stroke="#e6f7ff" stroke-width="0.8" stroke-opacity="0.7" opacity="0.38"/><circle cx="127.3" cy="79.6" r="3.2" fill="#3f9ee0" stroke="#e6f7ff" stroke-width="0.8" stroke-opacity="0.7" opacity="0.38"/><circle cx="130.5" cy="82.5" r="3.2" fill="#3f9ee0" stroke="#e6f7ff" stroke-width="0.8" stroke-opacity="0.7" opacity="0.38"/>
<circle cx="123.5" cy="57.0" r="3.2" fill="#3f9ee0" stroke="#e6f7ff" stroke-width="0.8" stroke-opacity="0.7" opacity="0.38"/><circle cx="124.4" cy="52.5" r="3.2" fill="#3f9ee0" stroke="#e6f7ff" stroke-width="0.8" stroke-opacity="0.7" opacity="0.38"/><circle cx="120.4" cy="54.0" r="3.2" fill="#3f9ee0" stroke="#e6f7ff" stroke-width="0.8" stroke-opacity="0.7" opacity="0.38"/>
<circle cx="170.6" cy="51.7" r="3.2" fill="#3f9ee0" stroke="#e6f7ff" stroke-width="0.8" stroke-opacity="0.7" opacity="0.38"/><circle cx="174.1" cy="54.5" r="3.2" fill="#3f9ee0" stroke="#e6f7ff" stroke-width="0.8" stroke-opacity="0.7" opacity="0.38"/><circle cx="174.6" cy="50.2" r="3.2" fill="#3f9ee0" stroke="#e6f7ff" stroke-width="0.8" stroke-opacity="0.7" opacity="0.38"/>
<circle cx="152.1" cy="125.5" r="3.2" fill="#3f9ee0" stroke="#e6f7ff" stroke-width="0.8" stroke-opacity="0.7" opacity="0.38"/><circle cx="156.3" cy="127.1" r="3.2" fill="#3f9ee0" stroke="#e6f7ff" stroke-width="0.8" stroke-opacity="0.7" opacity="0.38"/><circle cx="155.6" cy="122.9" r="3.2" fill="#3f9ee0" stroke="#e6f7ff" stroke-width="0.8" stroke-opacity="0.7" opacity="0.38"/>
<circle cx="149.9" cy="83.5" r="58" fill="none" stroke="#0d3f8a" stroke-opacity="0.28" stroke-width="6"/>
</g>
<circle cx="201.9" cy="99.5" r="3.8" fill="url(#spg)" stroke="#8fd0bc" stroke-width="0.6" stroke-opacity="0.7" opacity="0.92"/><circle cx="200.1" cy="104.6" r="3.8" fill="url(#spg)" stroke="#8fd0bc" stroke-width="0.6" stroke-opacity="0.7" opacity="0.92"/><circle cx="205.1" cy="103.5" r="3.8" fill="url(#spg)" stroke="#8fd0bc" stroke-width="0.6" stroke-opacity="0.7" opacity="0.92"/>
<circle cx="199.3" cy="111.5" r="3.8" fill="url(#spb)" stroke="#d5f2ff" stroke-width="0.6" stroke-opacity="0.7" opacity="0.92"/><circle cx="196.5" cy="116.1" r="3.8" fill="url(#spb)" stroke="#d5f2ff" stroke-width="0.6" stroke-opacity="0.7" opacity="0.92"/><circle cx="201.6" cy="116.1" r="3.8" fill="url(#spb)" stroke="#d5f2ff" stroke-width="0.6" stroke-opacity="0.7" opacity="0.92"/>
<circle cx="190.1" cy="124.1" r="3.8" fill="url(#spb)" stroke="#d5f2ff" stroke-width="0.6" stroke-opacity="0.7" opacity="0.92"/><circle cx="186.1" cy="127.7" r="3.8" fill="url(#spb)" stroke="#d5f2ff" stroke-width="0.6" stroke-opacity="0.7" opacity="0.92"/><circle cx="191.0" cy="129.1" r="3.8" fill="url(#spb)" stroke="#d5f2ff" stroke-width="0.6" stroke-opacity="0.7" opacity="0.92"/>
<circle cx="171.7" cy="132.6" r="3.8" fill="url(#spc)" stroke="#d5f2ff" stroke-width="0.6" stroke-opacity="0.7" opacity="0.92"/><circle cx="166.6" cy="134.5" r="3.8" fill="url(#spc)" stroke="#d5f2ff" stroke-width="0.6" stroke-opacity="0.7" opacity="0.92"/><circle cx="170.7" cy="137.6" r="3.8" fill="url(#spc)" stroke="#d5f2ff" stroke-width="0.6" stroke-opacity="0.7" opacity="0.92"/>
<circle cx="161.5" cy="138.3" r="3.8" fill="url(#spc)" stroke="#d5f2ff" stroke-width="0.6" stroke-opacity="0.7" opacity="0.92"/><circle cx="156.1" cy="139.2" r="3.8" fill="url(#spc)" stroke="#d5f2ff" stroke-width="0.6" stroke-opacity="0.7" opacity="0.92"/><circle cx="159.5" cy="143.1" r="3.8" fill="url(#spc)" stroke="#d5f2ff" stroke-width="0.6" stroke-opacity="0.7" opacity="0.92"/>
<circle cx="145.7" cy="136.9" r="3.8" fill="url(#spc)" stroke="#d5f2ff" stroke-width="0.6" stroke-opacity="0.7" opacity="0.92"/><circle cx="140.4" cy="136.2" r="3.8" fill="url(#spc)" stroke="#d5f2ff" stroke-width="0.6" stroke-opacity="0.7" opacity="0.92"/><circle cx="142.5" cy="140.8" r="3.8" fill="url(#spc)" stroke="#d5f2ff" stroke-width="0.6" stroke-opacity="0.7" opacity="0.92"/>
<circle cx="126.9" cy="133.3" r="3.8" fill="url(#spc)" stroke="#d5f2ff" stroke-width="0.6" stroke-opacity="0.7" opacity="0.92"/><circle cx="122.1" cy="130.8" r="3.8" fill="url(#spc)" stroke="#d5f2ff" stroke-width="0.6" stroke-opacity="0.7" opacity="0.92"/><circle cx="122.5" cy="135.9" r="3.8" fill="url(#spc)" stroke="#d5f2ff" stroke-width="0.6" stroke-opacity="0.7" opacity="0.92"/>
<circle cx="114.8" cy="124.1" r="3.8" fill="url(#spc)" stroke="#d5f2ff" stroke-width="0.6" stroke-opacity="0.7" opacity="0.92"/><circle cx="110.9" cy="120.4" r="3.8" fill="url(#spc)" stroke="#d5f2ff" stroke-width="0.6" stroke-opacity="0.7" opacity="0.92"/><circle cx="109.9" cy="125.4" r="3.8" fill="url(#spc)" stroke="#d5f2ff" stroke-width="0.6" stroke-opacity="0.7" opacity="0.92"/>
<circle cx="104.3" cy="115.8" r="3.8" fill="url(#spb)" stroke="#d5f2ff" stroke-width="0.6" stroke-opacity="0.7" opacity="0.92"/><circle cx="101.4" cy="111.3" r="3.8" fill="url(#spb)" stroke="#d5f2ff" stroke-width="0.6" stroke-opacity="0.7" opacity="0.92"/><circle cx="99.2" cy="115.9" r="3.8" fill="url(#spb)" stroke="#d5f2ff" stroke-width="0.6" stroke-opacity="0.7" opacity="0.92"/>
<circle cx="99.8" cy="103.5" r="3.8" fill="url(#spb)" stroke="#d5f2ff" stroke-width="0.6" stroke-opacity="0.7" opacity="0.92"/><circle cx="98.0" cy="98.4" r="3.8" fill="url(#spb)" stroke="#d5f2ff" stroke-width="0.6" stroke-opacity="0.7" opacity="0.92"/><circle cx="94.8" cy="102.3" r="3.8" fill="url(#spb)" stroke="#d5f2ff" stroke-width="0.6" stroke-opacity="0.7" opacity="0.92"/>
<circle cx="93.1" cy="84.1" r="3.8" fill="url(#spb)" stroke="#d5f2ff" stroke-width="0.6" stroke-opacity="0.7" opacity="0.92"/><circle cx="93.3" cy="78.7" r="3.8" fill="url(#spb)" stroke="#d5f2ff" stroke-width="0.6" stroke-opacity="0.7" opacity="0.92"/><circle cx="88.9" cy="81.3" r="3.8" fill="url(#spb)" stroke="#d5f2ff" stroke-width="0.6" stroke-opacity="0.7" opacity="0.92"/>
<circle cx="98.8" cy="67.4" r="3.8" fill="url(#spb)" stroke="#d5f2ff" stroke-width="0.6" stroke-opacity="0.7" opacity="0.92"/><circle cx="100.7" cy="62.3" r="3.8" fill="url(#spb)" stroke="#d5f2ff" stroke-width="0.6" stroke-opacity="0.7" opacity="0.92"/><circle cx="95.7" cy="63.3" r="3.8" fill="url(#spb)" stroke="#d5f2ff" stroke-width="0.6" stroke-opacity="0.7" opacity="0.92"/>
<circle cx="101.7" cy="54.7" r="3.8" fill="url(#spb)" stroke="#d5f2ff" stroke-width="0.6" stroke-opacity="0.7" opacity="0.92"/><circle cx="104.7" cy="50.2" r="3.8" fill="url(#spb)" stroke="#d5f2ff" stroke-width="0.6" stroke-opacity="0.7" opacity="0.92"/><circle cx="99.5" cy="50.1" r="3.8" fill="url(#spb)" stroke="#d5f2ff" stroke-width="0.6" stroke-opacity="0.7" opacity="0.92"/>
<circle cx="111.9" cy="42.5" r="3.8" fill="url(#spg)" stroke="#8fd0bc" stroke-width="0.6" stroke-opacity="0.7" opacity="0.92"/><circle cx="116.0" cy="39.0" r="3.8" fill="url(#spg)" stroke="#8fd0bc" stroke-width="0.6" stroke-opacity="0.7" opacity="0.92"/><circle cx="111.2" cy="37.5" r="3.8" fill="url(#spg)" stroke="#8fd0bc" stroke-width="0.6" stroke-opacity="0.7" opacity="0.92"/>
<circle cx="124.2" cy="36.7" r="3.8" fill="url(#spg)" stroke="#8fd0bc" stroke-width="0.6" stroke-opacity="0.7" opacity="0.92"/><circle cx="129.1" cy="34.3" r="3.8" fill="url(#spg)" stroke="#8fd0bc" stroke-width="0.6" stroke-opacity="0.7" opacity="0.92"/><circle cx="124.7" cy="31.6" r="3.8" fill="url(#spg)" stroke="#8fd0bc" stroke-width="0.6" stroke-opacity="0.7" opacity="0.92"/>
<circle cx="137.9" cy="31.6" r="3.8" fill="url(#spg)" stroke="#8fd0bc" stroke-width="0.6" stroke-opacity="0.7" opacity="0.92"/><circle cx="143.3" cy="30.6" r="3.8" fill="url(#spg)" stroke="#8fd0bc" stroke-width="0.6" stroke-opacity="0.7" opacity="0.92"/><circle cx="139.8" cy="26.8" r="3.8" fill="url(#spg)" stroke="#8fd0bc" stroke-width="0.6" stroke-opacity="0.7" opacity="0.92"/>
<circle cx="156.2" cy="28.7" r="3.8" fill="url(#spb)" stroke="#d5f2ff" stroke-width="0.6" stroke-opacity="0.7" opacity="0.92"/><circle cx="161.5" cy="29.5" r="3.8" fill="url(#spb)" stroke="#d5f2ff" stroke-width="0.6" stroke-opacity="0.7" opacity="0.92"/><circle cx="159.6" cy="24.8" r="3.8" fill="url(#spb)" stroke="#d5f2ff" stroke-width="0.6" stroke-opacity="0.7" opacity="0.92"/>
<circle cx="170.9" cy="34.0" r="3.8" fill="url(#spg)" stroke="#8fd0bc" stroke-width="0.6" stroke-opacity="0.7" opacity="0.92"/><circle cx="175.7" cy="36.4" r="3.8" fill="url(#spg)" stroke="#8fd0bc" stroke-width="0.6" stroke-opacity="0.7" opacity="0.92"/><circle cx="175.2" cy="31.3" r="3.8" fill="url(#spg)" stroke="#8fd0bc" stroke-width="0.6" stroke-opacity="0.7" opacity="0.92"/>
<circle cx="182.1" cy="40.2" r="3.8" fill="url(#spg)" stroke="#8fd0bc" stroke-width="0.6" stroke-opacity="0.7" opacity="0.92"/><circle cx="186.3" cy="43.7" r="3.8" fill="url(#spg)" stroke="#8fd0bc" stroke-width="0.6" stroke-opacity="0.7" opacity="0.92"/><circle cx="187.0" cy="38.6" r="3.8" fill="url(#spg)" stroke="#8fd0bc" stroke-width="0.6" stroke-opacity="0.7" opacity="0.92"/>
<circle cx="198.2" cy="53.0" r="3.8" fill="url(#spg)" stroke="#8fd0bc" stroke-width="0.6" stroke-opacity="0.7" opacity="0.92"/><circle cx="200.8" cy="57.7" r="3.8" fill="url(#spg)" stroke="#8fd0bc" stroke-width="0.6" stroke-opacity="0.7" opacity="0.92"/><circle cx="203.3" cy="53.2" r="3.8" fill="url(#spg)" stroke="#8fd0bc" stroke-width="0.6" stroke-opacity="0.7" opacity="0.92"/>
<circle cx="201.5" cy="69.2" r="3.8" fill="url(#spg)" stroke="#8fd0bc" stroke-width="0.6" stroke-opacity="0.7" opacity="0.92"/><circle cx="202.7" cy="74.5" r="3.8" fill="url(#spg)" stroke="#8fd0bc" stroke-width="0.6" stroke-opacity="0.7" opacity="0.92"/><circle cx="206.3" cy="70.9" r="3.8" fill="url(#spg)" stroke="#8fd0bc" stroke-width="0.6" stroke-opacity="0.7" opacity="0.92"/>
<circle cx="206.6" cy="78.6" r="3.8" fill="url(#spg)" stroke="#8fd0bc" stroke-width="0.6" stroke-opacity="0.7" opacity="0.92"/><circle cx="206.8" cy="84.0" r="3.8" fill="url(#spg)" stroke="#8fd0bc" stroke-width="0.6" stroke-opacity="0.7" opacity="0.92"/><circle cx="211.1" cy="81.2" r="3.8" fill="url(#spg)" stroke="#8fd0bc" stroke-width="0.6" stroke-opacity="0.7" opacity="0.92"/>
</g>
</svg>
<svg class="abs" style="left:436px;top:62px" width="68" height="74" viewBox="0 0 68 74">
<defs><path id="arc" d="M9.600 26.500 A25.600 29.100 0 0 1 57.800 26.500"/></defs>
<g fill="none" stroke="#3a54a0" stroke-width="0.500" stroke-opacity="0.850">
<path d="M6.300 27.500 A28 31 0 0 0 25 66.200 M42.500 66.200 A28 31 0 0 0 61.200 27.500"/>
<path d="M4.700 27 A29.600 32.600 0 0 0 25 68 M42.500 68 A29.600 32.600 0 0 0 62.800 27"/>
</g>
<ellipse cx="33.700" cy="36.400" rx="24.500" ry="27" fill="#1f3c93"/>
<path d="M15.6 44.5 L18.6 40.0 L17.7 37.3 L21.3 34.6 L27.6 32.8 L33.9 31.9 L37.9 30.1 L38.4 28.0 L36.1 27.3 L36.4 25.5 L40.2 24.7 L46.5 22.9 L52.8 22.0 L51.0 24.4 L47.4 26.9 L42.9 29.2 L41.1 31.9 L41.1 36.4 L42.9 39.1 L46.8 40.5 L46.8 43.1 L43.8 44.5 L42.9 48.1 L39.3 49.4 L36.1 48.1 L34.8 45.4 L31.2 45.9 L28.9 48.5 L25.8 46.3 L22.2 44.9 L18.6 45.4 Z" fill="#4fc0b6" stroke="#4fc0b6" stroke-width="0.600" stroke-linejoin="round"/>
<text font-size="5.300" font-weight="bold" fill="#27408f" stroke="#27408f" stroke-width="0.150" font-family="Liberation Sans,sans-serif"><textPath href="#arc" startOffset="0" textLength="65.500" lengthAdjust="spacingAndGlyphs">VAN YÜZÜNCÜ YIL ÜNİVERSİTESİ</textPath></text>
<text x="33.700" y="68.300" font-size="4.200" font-weight="bold" fill="#27408f" text-anchor="middle" font-family="Liberation Sans,sans-serif">1982</text>
</svg>

<!-- video pod -->
<div class="tb" style="left:562px;width:188px;height:20px">
<span class="pt" style="left:4px">Video</span><span class="pc" style="left:34px">(2)</span>
<div class="btn" style="left:58.500px;top:3.500px;width:49px;height:14px;line-height:12px;color:#a2a2a2;border-color:#bcbcbc;text-align:left;padding-left:9px;font-size:7.800px;letter-spacing:0;background:linear-gradient(#efefef,#e2e2e2)">Başlat
<svg class="abs" style="left:33px;top:2px" width="9" height="9" viewBox="0 0 9 9"><circle cx="4.500" cy="3.300" r="2.500" fill="none" stroke="#a4a4a4" stroke-width="1.600"/><path d="M0.500 8.800 C1.200 6.800 3 6.400 4.500 6.400 C6 6.400 7.800 6.800 8.500 8.800 Z" fill="#a4a4a4"/></svg></div>
<div class="abs" style="left:113px;top:3.500px;width:16.500px;height:14px;background:#c2c2c2;border:1px solid #b6b6b6;border-radius:2px 0 0 2px"><svg width="15" height="12" viewBox="0 0 15 12" style="display:block"><g fill="#a2a2a2"><rect x="2" y="1.500" width="3" height="2.500"/><rect x="6" y="1.500" width="3" height="2.500"/><rect x="10" y="1.500" width="3" height="2.500"/><rect x="2" y="5" width="3" height="2.500"/><rect x="6" y="5" width="3" height="2.500"/><rect x="10" y="5" width="3" height="2.500"/><rect x="2" y="8.500" width="3" height="2.500"/><rect x="6" y="8.500" width="3" height="2.500"/><rect x="10" y="8.500" width="3" height="2.500"/></g></svg></div>
<div class="abs" style="left:129.500px;top:3.500px;width:16.500px;height:14px;background:linear-gradient(#f6f6f6,#e4e4e4);border:1px solid #b6b6b6;border-left:none;border-radius:0 2px 2px 0"><svg width="15" height="12" viewBox="0 0 15 12" style="display:block"><g fill="#a5a5a5"><rect x="2.500" y="1.500" width="10.500" height="6"/><rect x="2.500" y="8.800" width="3" height="2"/><rect x="6.300" y="8.800" width="3" height="2"/><rect x="10" y="8.800" width="3" height="2"/></g></svg></div>
<svg class="abs" style="left:152px;top:5px" width="11" height="11" viewBox="0 0 11 11"><g fill="#b3b3b3"><path d="M0 0h4.700L3.300 1.400 5.200 3.300 3.300 5.200 1.400 3.300 0 4.700z"/><path d="M11 0v4.700L9.600 3.300 7.700 5.200 5.800 3.300 7.700 1.400 6.300 0z"/><path d="M0 11V6.300l1.400 1.400L3.300 5.800 5.200 7.700 3.300 9.600 4.700 11z"/><path d="M11 11H6.300l1.400-1.400L5.800 7.700 7.700 5.800 9.600 7.700 11 6.300z"/></g></svg>
<div class="sep" style="left:170px;top:4px;height:12px;background:#9a9a9a"></div>
<div class="abs" style="left:186px;top:8px;width:3px;height:4px;background:#999"></div>
</div>
<div class="abs" style="left:562px;top:60px;width:188px;height:114px;background:#000"></div>
<!-- thumb 1 -->
<svg class="abs" style="left:565px;top:81px" width="98" height="72" viewBox="0 0 98 72">
<defs>
<linearGradient id="cur" x1="0" x2="1"><stop offset="0" stop-color="#f2f2f6"/><stop offset="0.150" stop-color="#a6a6bc"/><stop offset="0.500" stop-color="#55535e"/><stop offset="1" stop-color="#353231"/></linearGradient>
<radialGradient id="f1" cx="50%" cy="40%" r="60%"><stop offset="0" stop-color="#a67e66"/><stop offset="1" stop-color="#755342"/></radialGradient>
<filter id="bl1" x="-10%" y="-10%" width="120%" height="120%"><feGaussianBlur stdDeviation="0.700"/></filter>
</defs>
<rect width="98" height="72" fill="#353231"/>
<rect x="0" y="0" width="27" height="72" fill="#fbfbf9"/>
<rect x="25.500" y="0" width="15" height="72" fill="url(#cur)"/>
<rect x="76" y="0" width="22" height="72" fill="#2b2928"/>
<g filter="url(#bl1)">
<rect x="40" y="0" width="29.500" height="18.500" fill="#e6e4e0"/>
<rect x="45" y="3" width="19" height="12" fill="#c4c4c0"/>
<path d="M47 11 L50 7 L53 9 L56 6 L60 8 L61 11 Z" fill="#6a6a68"/><rect x="47" y="11" width="14" height="1.500" fill="#4a4a48"/>
<path d="M28 50 L34 42 L44 42 L44 56 L28 60 Z" fill="#1c1b1c"/>
<path d="M10 72 C12 58 22 52 36 49 L60 49 C72 52 78 58 80 72 Z" fill="#30375c"/>
<path d="M40 46 L56 46 L57 53 C52 57 44 57 39 53 Z" fill="#8a644f"/>
<ellipse cx="47.500" cy="33" rx="11.500" ry="15" fill="url(#f1)"/>
<path d="M36.200 30 C36 20 41 17.500 47.500 17.500 C54 17.500 59 20 58.800 30 C57 23 53 21.500 47.500 21.500 C42 21.500 38 23 36.200 30 Z" fill="#4a382f"/>
<path d="M36.800 36 C38 47 42 51.500 47.500 51.500 C53 51.500 57 47 58.200 36 C57 41 54 42 47.500 42 C41 42 38 41 36.800 36 Z" fill="#2a201c"/>
<path d="M42 43 C45 41.500 50 41.500 53 43 C51 47 44 47 42 43Z" fill="#2a201c"/>
<rect x="38.500" y="30.500" width="7" height="3.600" rx="1.200" fill="#7a6a58" stroke="#2a2420" stroke-width="0.600"/>
<rect x="49.500" y="30.500" width="7" height="3.600" rx="1.200" fill="#6f8f68" stroke="#2a2420" stroke-width="0.600"/><rect x="51" y="31.200" width="4" height="1.400" fill="#5fc878" opacity="0.800"/><path d="M45.500 32h4" stroke="#2a2420" stroke-width="0.600"/><path d="M46.500 34 L46 39.500 L49 39.500" fill="none" stroke="#7a5540" stroke-width="0.700" opacity="0.700"/>
</g>
<rect x="1.800" y="60.200" width="67" height="10.200" rx="5.100" fill="#1a1a1c" fill-opacity="0.820"/>
<text x="9" y="68" font-size="7.600" font-weight="bold" fill="#f4f4f4" font-family="Liberation Sans,sans-serif" textLength="54" lengthAdjust="spacingAndGlyphs">Dr. Mehmet Mart</text>
</svg>
<!-- thumb 2 -->
<svg class="abs" style="left:667px;top:81px" width="83" height="72" viewBox="0 0 83 72">
<defs>
<radialGradient id="f2" cx="50%" cy="42%" r="60%"><stop offset="0" stop-color="#cfa58f"/><stop offset="1" stop-color="#8f6655"/></radialGradient>
<linearGradient id="gold" x1="0" x2="1"><stop offset="0" stop-color="#7d5a1e"/><stop offset="0.500" stop-color="#d9c48a"/><stop offset="1" stop-color="#6d4d1a"/></linearGradient>
<filter id="bl2" x="-10%" y="-10%" width="120%" height="120%"><feGaussianBlur stdDeviation="0.600"/></filter>
</defs>
<rect width="83" height="72" fill="#141210"/>
<rect width="83" height="33" fill="#e4e3e1"/>
<g filter="url(#bl2)">
<path d="M41 0 C46 4 47 10 45 16 L52 16 C54 9 53 4 51 0 Z" fill="#8a6a2a"/>
<rect x="0" y="24" width="10" height="10" fill="#6f5424"/>
<path d="M6.500 13.500 H24 C24 22 22 28 19 31 H11.500 C8.500 28 6.500 22 6.500 13.500 Z" fill="url(#gold)"/>
<rect x="25" y="12" width="4" height="19" fill="#5a4526"/>
<rect x="32" y="14" width="3.500" height="17" fill="#4f3d22"/>
<path d="M23 10 L31 10 L29 14 L25 14Z" fill="#3a2d1c"/>
<rect x="0" y="32" width="83" height="7" fill="#3a2a1f"/>
<rect x="0" y="38" width="83" height="34" fill="#15110f"/>
<rect x="58" y="33.500" width="25" height="15" fill="#3a2218"/>
<path d="M6 72 C8 56 22 49 38 46 L58 46 C70 49 80 54 83 66 L83 72 Z" fill="#0d0d0e"/>
<path d="M40 44 L56 44 L57 52 C52 58 44 58 39 52 Z" fill="#a57c69"/>
<ellipse cx="47.500" cy="30" rx="12.500" ry="17.500" fill="url(#f2)"/>
<path d="M35.200 25 C35 15 41 11.500 47.500 11.500 C54 11.500 60 15 59.800 25 C58 18 54 15.500 47.500 15.500 C41 15.500 37 18 35.200 25 Z" fill="#6c544a"/>
<path d="M36.500 36 C38 44 42 47.500 47.500 47.500 C53 47.500 57 44 58.500 36 C56 41.500 53 43 47.500 43 C42 43 39 41.500 36.500 36Z" fill="#7f6156" opacity="0.800"/>
<path d="M42.500 38.500 C45 40.500 50 40.500 52.500 38.500 C51 41.500 44 41.500 42.500 38.500Z" fill="#f0e6e0"/>
<rect x="39.500" y="24" width="6" height="1.300" fill="#4a342c"/><rect x="50" y="24" width="6" height="1.300" fill="#4a342c"/><ellipse cx="42.500" cy="27.500" rx="2" ry="1" fill="#2e211c"/><ellipse cx="53" cy="27.500" rx="2" ry="1" fill="#2e211c"/><path d="M47.500 28 L46.500 34.500 L49.500 34.500" fill="none" stroke="#8a5f50" stroke-width="0.800" opacity="0.700"/>
</g>
<path d="M59.500 32 C59 42 52 52 47.500 59 L47.500 68 M47.500 59 C45 54 43.500 50 43 46" fill="none" stroke="#e9e9e9" stroke-width="0.800"/>
<text x="8.600" y="69" font-size="7.600" font-weight="bold" fill="#f4f4f4" font-family="Liberation Sans,sans-serif" textLength="42" lengthAdjust="spacingAndGlyphs">Ramazan SAK</text>
</svg>

<!-- attendees pod -->
<div class="abs" style="left:562px;top:174px;width:188px;height:4px;background:linear-gradient(#383838,#4c4c4c)"></div>
<div class="abs" style="left:562px;top:178px;width:188px;height:177px;background:#fff;overflow:hidden">
<div class="abs" style="left:0;top:0;width:188px;height:21px;background:linear-gradient(#f4f4f4 0,#ebebeb 12%,#e2e2e2 50%,#cecece 100%);border-bottom:1px solid #9a9a9a">
<span class="pt" style="left:4.500px;transform-origin:0 50%;transform:scaleX(0.935)">Katılımcılar</span><span class="pc" style="left:57px">(10)</span>
<div class="abs" style="left:186px;top:7px;width:3px;height:1px;background:#888;box-shadow:0 2px 0 #888,0 4px 0 #888"></div>
</div>
<div class="abs" style="left:0;top:21px;width:188px;height:20.500px;background:#e9e9e9;border-bottom:1px solid #b9b9b9">
<div class="abs" style="left:5px;top:2px;width:16.500px;height:15.500px;background:#8c8c8c;border:1px solid #6e6e6e;border-radius:2px 0 0 2px"><svg width="15" height="14" viewBox="0 0 15 14" style="display:block"><g fill="#a9a9a9"><rect x="1.500" y="1.500" width="12" height="2.200"/><rect x="1.500" y="4.600" width="12" height="2.200"/><rect x="1.500" y="7.700" width="12" height="2.200"/><rect x="1.500" y="10.800" width="12" height="2.200"/></g></svg></div>
<div class="abs" style="left:21.500px;top:2px;width:16px;height:15.500px;background:linear-gradient(#fff,#e9e9e9);border:1px solid #8a8a8a;border-left:none"><svg width="15" height="14" viewBox="0 0 15 14" style="display:block"><g fill="#444"><rect x="2.500" y="2.500" width="3.400" height="2.800"/><rect x="9.100" y="2.500" width="3.400" height="2.800"/><rect x="2.500" y="8.700" width="3.400" height="2.800"/><rect x="9.100" y="8.700" width="3.400" height="2.800"/><rect x="6" y="5.800" width="3" height="2.400"/></g><path d="M4.200 4L10.800 10M10.800 4L4.200 10" stroke="#444" stroke-width="0.900"/></svg></div>
<div class="abs" style="left:37.500px;top:2px;width:16.500px;height:15.500px;background:linear-gradient(#fff,#e9e9e9);border:1px solid #8a8a8a;border-left:none;border-radius:0 2px 2px 0"><svg width="15" height="14" viewBox="0 0 15 14" style="display:block"><circle cx="5" cy="4.500" r="1.900" fill="#3a3a3a"/><path d="M1.500 9.500 C2 7.300 3.500 6.800 5 6.800 C6.500 6.800 8 7.300 8.500 9.500Z" fill="#3a3a3a"/><path d="M9.500 6.500h4M9.500 8.700h4M9.500 10.900h4" stroke="#555" stroke-width="1"/></svg></div>
</div>
<div class="row" style="top:41.500px;height:14.500px;background:#ededed"><svg class="abs" style="left:5px;top:1.500px" width="14" height="12" viewBox="0 0 14 12"><path d="M2.500 1 C1 2.500 1.500 5.500 3.500 8 C5.500 10.300 8 11.300 9.500 10.300 L8.300 7.900 L6.900 8.500 C5.800 7.800 4.700 6.400 4.300 5.200 L5.300 4.200 L4.300 1.200 Z" fill="#dfe9f2" stroke="#3d6e9c" stroke-width="0.900"/><path d="M9 4.500 a2 2 0 1 1 -0.500 3.500 M11 5.500 a2.500 2.500 0 0 1 0.500 3" fill="none" stroke="#555" stroke-width="0.800"/></svg><span style="left:20px;transform:scaleX(0.950)">Ramazan SAK</span></div>
<div class="grp" style="top:56px"><i class="abs" style="left:5px;top:3.500px;border:2.500px solid transparent;border-left:3.500px solid #333"></i><span>Toplantı Sahipleri (1)</span></div>
<div class="grp" style="top:70px"><i class="abs" style="left:3.500px;top:5px;border:2.500px solid transparent;border-top:3.500px solid #333"></i><span>Sunucular (3)</span></div>
<div class="row" style="top:84.500px;border-bottom:1px solid #e2e2e2"><svg class="abs" style="left:6px;top:1px" width="12" height="12" viewBox="0 0 12 12"><rect x="0.500" y="0.500" width="9" height="7" fill="#dde8f3" stroke="#5f7694" stroke-width="1"/><rect x="2" y="2" width="6" height="1" fill="#7f9cbd"/><rect x="2" y="4" width="4" height="1" fill="#7f9cbd"/><circle cx="8" cy="6.500" r="1.900" fill="#5b8fc9" stroke="#2f4f7a" stroke-width="0.500"/><path d="M4.500 11.500 C5 9 6.500 8.500 8 8.500 C9.500 8.500 11 9 11.500 11.500Z" fill="#5b8fc9" stroke="#2f4f7a" stroke-width="0.500"/></svg><span style="letter-spacing:0.200px">Dr. Mehmet Mart</span></div>
<div class="row" style="top:98.500px;border-bottom:1px solid #e2e2e2"><svg class="abs" style="left:6px;top:1px" width="12" height="12" viewBox="0 0 12 12"><rect x="0.500" y="0.500" width="9" height="7" fill="#dde8f3" stroke="#5f7694" stroke-width="1"/><rect x="2" y="2" width="6" height="1" fill="#7f9cbd"/><rect x="2" y="4" width="4" height="1" fill="#7f9cbd"/><circle cx="8" cy="6.500" r="1.900" fill="#5b8fc9" stroke="#2f4f7a" stroke-width="0.500"/><path d="M4.500 11.500 C5 9 6.500 8.500 8 8.500 C9.500 8.500 11 9 11.500 11.500Z" fill="#5b8fc9" stroke="#2f4f7a" stroke-width="0.500"/></svg><span style="transform:scaleX(0.950)">Ramazan SAK</span><svg class="abs" style="left:180.500px;top:1px" width="10" height="12" viewBox="0 0 10 12"><rect x="3.500" y="1" width="4" height="6.500" rx="2" fill="#8a8f94" stroke="#444" stroke-width="0.600"/><path d="M1.800 6 a3.700 3.700 0 0 0 7.400 0M5.500 9.800v1.500M3 11.500h5" fill="none" stroke="#444" stroke-width="0.900"/><path d="M4.500 2.500h2M4.500 4h2M4.500 5.500h2" stroke="#555" stroke-width="0.500"/></svg></div>
<div class="row" style="top:112.500px"><svg class="abs" style="left:6px;top:1px" width="12" height="12" viewBox="0 0 12 12"><rect x="0.500" y="0.500" width="9" height="7" fill="#dde8f3" stroke="#5f7694" stroke-width="1"/><rect x="2" y="2" width="6" height="1" fill="#7f9cbd"/><rect x="2" y="4" width="4" height="1" fill="#7f9cbd"/><circle cx="8" cy="6.500" r="1.900" fill="#5b8fc9" stroke="#2f4f7a" stroke-width="0.500"/><path d="M4.500 11.500 C5 9 6.500 8.500 8 8.500 C9.500 8.500 11 9 11.500 11.500Z" fill="#5b8fc9" stroke="#2f4f7a" stroke-width="0.500"/></svg><span>Yuwei XU</span><svg class="abs" style="left:180.500px;top:1px" width="10" height="12" viewBox="0 0 10 12"><rect x="3.500" y="1" width="4" height="6.500" rx="2" fill="#8a8f94" stroke="#444" stroke-width="0.600"/><path d="M1.800 6 a3.700 3.700 0 0 0 7.400 0M5.500 9.800v1.500M3 11.500h5" fill="none" stroke="#444" stroke-width="0.900"/><path d="M4.500 2.500h2M4.500 4h2M4.500 5.500h2" stroke="#555" stroke-width="0.500"/><path d="M1.500 11 L9.800 1.500" stroke="#d22" stroke-width="1.300"/></svg></div>
<div class="grp" style="top:127px"><i class="abs" style="left:3.500px;top:5px;border:2.500px solid transparent;border-top:3.500px solid #333"></i><span>Katılımcılar (6)</span></div>
<div class="row" style="top:141.500px;border-bottom:1px solid #e2e2e2"><svg class="abs" style="left:7px;top:2px" width="9" height="11" viewBox="0 0 9 11"><path d="M0.500 10.300 C0.500 7.500 2 6.600 4.500 6.600 C7 6.600 8.500 7.500 8.500 10.300 Z" fill="#4a90e2" stroke="#2f62a8" stroke-width="0.600"/><rect x="2.300" y="0.500" width="4.400" height="6" rx="1.900" fill="#ecdcb4" stroke="#8a8f98" stroke-width="0.700"/><rect x="0.300" y="9.600" width="8.400" height="1" fill="#2f6fc4"/></svg><span>Ayşe</span></div>
<div class="row" style="top:155.500px;border-bottom:1px solid #e2e2e2"><svg class="abs" style="left:7px;top:2px" width="9" height="11" viewBox="0 0 9 11"><path d="M0.500 10.300 C0.500 7.500 2 6.600 4.500 6.600 C7 6.600 8.500 7.500 8.500 10.300 Z" fill="#4a90e2" stroke="#2f62a8" stroke-width="0.600"/><rect x="2.300" y="0.500" width="4.400" height="6" rx="1.900" fill="#ecdcb4" stroke="#8a8f98" stroke-width="0.700"/><rect x="0.300" y="9.600" width="8.400" height="1" fill="#2f6fc4"/></svg><span>HİLAL</span></div>
<div class="row" style="top:169.500px"><svg class="abs" style="left:7px;top:2px" width="9" height="11" viewBox="0 0 9 11"><path d="M0.500 10.300 C0.500 7.500 2 6.600 4.500 6.600 C7 6.600 8.500 7.500 8.500 10.300 Z" fill="#4a90e2" stroke="#2f62a8" stroke-width="0.600"/><rect x="2.300" y="0.500" width="4.400" height="6" rx="1.900" fill="#ecdcb4" stroke="#8a8f98" stroke-width="0.700"/><rect x="0.300" y="9.600" width="8.400" height="1" fill="#2f6fc4"/></svg><span style="top:1px">is</span></div>
</div>

<!-- chat pod -->
<div class="abs" style="left:562px;top:357px;width:188px;height:114px;background:#ececec;overflow:hidden">
<div class="abs" style="left:0;top:0;width:188px;height:20px;background:linear-gradient(#f4f4f4 0,#ebebeb 12%,#e2e2e2 50%,#cecece 100%);border-bottom:1px solid #9a9a9a">
<span class="pt" style="left:4px;line-height:19px;transform:scaleX(0.950)">Sohbet</span><span class="pc" style="left:39px;line-height:19px;font-weight:normal;font-size:7.600px;color:#333;letter-spacing:-0.100px">(Herkes)</span>
<div class="abs" style="left:186px;top:9px;width:2px;height:3px;background:#888"></div>
</div>
<div class="abs" id="chat" style="left:4.500px;top:24.500px;width:260px;font-size:8.300px;line-height:9.300px;color:#222;white-space:nowrap;transform-origin:0 0;transform:scaleX(0.885)"><b>Dr. Mehmet Mart:</b> please feel free to write your questions<br>so we can discuss those questions at the end...</div>
<div class="abs" style="left:0;top:78.500px;width:188px;height:20.500px;background:#e3e3e3;border-top:1px solid #bdbdbd"></div>
<div class="abs" style="left:5px;top:81.500px;width:174px;height:15px;background:#fff;border:1px solid #8a8a8a;border-radius:2px"></div>
<div class="abs" style="left:181px;top:81.500px;width:12px;height:15px;background:linear-gradient(#fcfcfc,#dedede);border:1px solid #8a8a8a;border-radius:2px"><svg width="10" height="13" viewBox="0 0 10 13"><path d="M3 4.500 a3.500 3 0 0 1 7 0 v4 h-7 z" fill="#aaa"/></svg></div>
<div class="abs" style="left:0;top:99px;width:188px;height:16px;border-top:1px solid #8f8f8f;background:repeating-linear-gradient(135deg,#e3e3e3 0,#e3e3e3 1.400px,#cdcdcd 1.400px,#cdcdcd 2.100px)"></div>
<div class="abs" style="left:0;top:99px;width:41px;height:16px;background:#f4f4f4;border-right:1px solid #8f8f8f;font-size:8px;font-weight:bold;color:#222;line-height:16px;padding-left:4.500px"><span style="display:inline-block;transform-origin:0 50%;transform:scaleX(0.880)">Herkes</span></div>
</div>

<!-- taskbar -->
<div class="abs" style="left:0;top:471px;width:750px;height:4px;background:#363636"></div>
<div class="abs" id="task" style="left:0;top:474.500px;width:750px;height:26.500px;background:linear-gradient(90deg,#203a44 0%,#1c3342 40%,#1a2c44 75%,#1b2a47 100%);overflow:hidden">
<div class="abs" style="left:408px;top:0;width:32px;height:26px;background:#3d4f60"></div>
<div class="abs" style="left:155px;top:24.500px;width:26px;height:1.500px;background:#7fb2e6"></div>
<div class="abs" style="left:188px;top:24.500px;width:26px;height:1.500px;background:#7fb2e6"></div>
<div class="abs" style="left:251px;top:24.500px;width:26px;height:1.500px;background:#7fb2e6"></div>
<div class="abs" style="left:283px;top:24.500px;width:26px;height:1.500px;background:#7fb2e6"></div>
<div class="abs" style="left:315px;top:24.500px;width:26px;height:1.500px;background:#7fb2e6"></div>
<div class="abs" style="left:347px;top:24.500px;width:26px;height:1.500px;background:#7fb2e6"></div>
<div class="abs" style="left:379px;top:24.500px;width:26px;height:1.500px;background:#7fb2e6"></div>
<div class="abs" style="left:411px;top:24.500px;width:26px;height:1.500px;background:#7fb2e6"></div>
<div class="abs" style="left:443px;top:24.500px;width:26px;height:1.500px;background:#7fb2e6"></div>
<div class="abs" style="left:475px;top:24.500px;width:26px;height:1.500px;background:#7fb2e6"></div>

<!-- task view -->
<svg class="abs" style="left:2px;top:6px" width="12" height="12" viewBox="0 0 12 12"><path d="M0 2.500h2M0 9.500h2M2 1v10M2 3.500h5v5h-5M9 2v8M11 3.500v1M11 7.500v1" fill="none" stroke="#e8e8e8" stroke-width="1"/></svg>
<!-- blue circle -->
<svg class="abs" style="left:33px;top:5px" width="15" height="15" viewBox="0 0 15 15"><circle cx="7.500" cy="7.500" r="7" fill="#2f86e0" stroke="#bfe0ff" stroke-width="0.800"/><path d="M4.500 3.500v3.500h2v-3.500M8.500 3.500v3.500h2v-3.500M5.500 7v4.500M9.500 7v4.500M4 11.500h3M8 11.500h3" fill="none" stroke="#fff" stroke-width="0.900"/></svg>
<!-- zoom -->
<svg class="abs" style="left:65px;top:5px" width="15" height="15" viewBox="0 0 15 15"><rect width="15" height="15" rx="3.500" fill="#3d83f2"/><rect x="3" y="5" width="6.500" height="5" rx="1" fill="#fff"/><path d="M10 7l2.500-1.800v4.600L10 8z" fill="#fff"/></svg>
<!-- cocktail -->
<svg class="abs" style="left:97px;top:4px" width="15" height="16" viewBox="0 0 15 16"><path d="M6 1c1.500-1 3.500 0 4 1.500 1.500-.5 2.500.500 2 1.500-2-.5-4-.5-6-3z" fill="#3f9a3a"/><ellipse cx="9.800" cy="8.500" rx="3.600" ry="4.200" fill="#c98a2c"/><path d="M7.500 6.500l4.500 4M7 9l4 3.500M9 4.800l3.500 3.200" stroke="#8a5a1a" stroke-width="0.700"/><path d="M0.500 4.500h6.500L3.800 9z" fill="#d9486e" stroke="#f2c5d0" stroke-width="0.500"/><path d="M3.800 9v4M2 13.300h3.600" stroke="#e8dede" stroke-width="0.800"/></svg>
<!-- file + cloud -->
<svg class="abs" style="left:128px;top:5px" width="16" height="15" viewBox="0 0 16 15"><path d="M1 0.500h7v12.500h-7z" fill="#f6c64a"/><path d="M1 0.500h2.500v12.500h-2.500z" fill="#e6a92a"/><path d="M6 14.500 a2.300 2.300 0 0 1 0.600-4.500 a3 3 0 0 1 5.600 0.500 a2.100 2.100 0 0 1 0.800 4z" fill="#1f8ee6"/></svg>
<!-- folder -->
<svg class="abs" style="left:160px;top:6px" width="16" height="13" viewBox="0 0 16 13"><path d="M0.500 1h5.500l1 1.500h8.500v10h-15z" fill="#e9b63a"/><rect x="0.500" y="3.500" width="15" height="9" fill="#f8d568"/><rect x="4" y="7" width="8" height="5.500" fill="#3f8ad8"/><rect x="5.500" y="9.500" width="5" height="3" fill="#f8d568"/></svg>
<!-- skype -->
<svg class="abs" style="left:193px;top:4px" width="17" height="17" viewBox="0 0 17 17"><circle cx="7.500" cy="7.500" r="6.800" fill="#fff"/><circle cx="7.500" cy="7.500" r="5.900" fill="#19a7e8"/><text x="7.500" y="10.800" font-size="9" font-weight="bold" fill="#fff" text-anchor="middle" font-family="Liberation Sans,sans-serif">S</text><circle cx="12.800" cy="12.800" r="3.400" fill="#5cb531" stroke="#14273a" stroke-width="0.800"/><path d="M11.200 12.800l1.200 1.200 2-2.300" fill="none" stroke="#fff" stroke-width="0.900"/></svg>
<!-- edge -->
<svg class="abs" style="left:225px;top:5px" width="15" height="15" viewBox="0 0 15 15"><defs><linearGradient id="eg" x1="0" y1="0" x2="1" y2="1"><stop offset="0" stop-color="#36c6b0"/><stop offset="0.500" stop-color="#1e8ed8"/><stop offset="1" stop-color="#0d56b0"/></linearGradient></defs><circle cx="7.500" cy="7.500" r="7.200" fill="url(#eg)"/><path d="M4.500 9.500c0-3 5-4 7-1.500c1 1.500-0.500 2.500-2 2.500c0.500 1.500 2.500 2 4 1c-1.500 3-7 4-9-2z" fill="#14273a" opacity="0.850"/><path d="M0.600 7c1-5 8-7 12-3c1.500 1.500 2 3.500 1.500 4.500c-1-2.500-4-4-7-3c-2.500 1-3.500 3-3 5.500c-2-1-3.500-2.500-3.500-4z" fill="#3fd0a0" opacity="0.600"/></svg>
<!-- chrome -->
<svg class="abs" style="left:257px;top:5px" width="15" height="15" viewBox="0 0 15 15"><circle cx="7.500" cy="7.500" r="7.300" fill="#fff"/><path d="M7.500 7.500L1.200 3.900A7.300 7.300 0 0 1 13.800 3.900z" fill="#e33b2e"/><path d="M7.500 7.500L13.800 3.900A7.300 7.300 0 0 1 7.500 14.800z" fill="#fbc116"/><path d="M7.500 7.500L7.500 14.800A7.300 7.300 0 0 1 1.200 3.900z" fill="#2da94f"/><circle cx="7.500" cy="7.500" r="3.300" fill="#fff"/><circle cx="7.500" cy="7.500" r="2.600" fill="#3f82f0"/></svg>
<!-- outlook -->
<svg class="abs" style="left:289px;top:6px" width="15" height="13" viewBox="0 0 15 13"><rect x="5" y="1.500" width="9.500" height="10" fill="#1a8ad8"/><path d="M6.500 4h7l-3.500 3z" fill="#fff"/><path d="M6.500 4.500v5h7v-5l-3.500 3z" fill="#d6ecfb"/><rect x="0" y="0" width="8" height="13" fill="#0f6cbd"/><ellipse cx="4" cy="6.500" rx="2.300" ry="2.900" fill="none" stroke="#fff" stroke-width="1.300"/></svg>
<!-- whatsapp -->
<svg class="abs" style="left:320px;top:4px" width="16" height="16" viewBox="0 0 16 16"><path d="M0.500 15.500l1.200-4A7.300 7.300 0 1 1 4.600 14.400z" fill="#fff"/><circle cx="8.200" cy="7.800" r="6.200" fill="#2ec64e"/><path d="M5.600 4.600c-1 .8-.8 2.600.8 4.400s3.500 2.600 4.500 1.800l.5-.9-1.600-1-.8.700c-.8-.3-1.800-1.300-2.200-2.200l.7-.7-.8-1.800z" fill="#fff"/></svg>
<!-- word -->
<svg class="abs" style="left:353px;top:6px" width="15" height="13" viewBox="0 0 15 13"><rect x="6" y="1" width="8.500" height="11" fill="#fff" stroke="#2a5caa" stroke-width="0.800"/><path d="M9.500 3.500h3.500M9.500 5.500h3.500M9.500 7.500h3.500M9.500 9.500h3.500" stroke="#2a5caa" stroke-width="0.800"/><rect width="9" height="13" fill="#2b5fb4"/><text x="4.500" y="9.800" font-size="8" font-weight="bold" fill="#fff" text-anchor="middle" font-family="Liberation Sans,sans-serif">W</text></svg>
<!-- acrobat -->
<svg class="abs" style="left:385px;top:5px" width="15" height="15" viewBox="0 0 15 15"><rect x="0.500" y="0.500" width="14" height="14" rx="1.500" fill="#2a0a08" stroke="#c2241a" stroke-width="1"/><path d="M3 12c1.500-1 3.500-5 4-8c0.200-1.500 1.200-1.200 1 0c-0.500 3 2 6 4 6c1 0 1-1-0.500-1c-2.500 0-6 1.500-8.500 3z" fill="none" stroke="#f04a3a" stroke-width="1.100"/></svg>
<!-- connect -->
<svg class="abs" style="left:418.500px;top:7.500px" width="11" height="11" viewBox="0 0 15 15"><rect x="0.700" y="0.700" width="13.600" height="13.600" fill="#123a2a" stroke="#5fd0a0" stroke-width="1.400"/><path d="M4.200 4.200l6.600 6.600M10.800 4.200l-6.600 6.600" stroke="#c8f2e0" stroke-width="1.300"/><circle cx="4.200" cy="4.200" r="1.500" fill="#c8f2e0"/><circle cx="10.800" cy="4.200" r="1.500" fill="#c8f2e0"/><circle cx="4.200" cy="10.800" r="1.500" fill="#c8f2e0"/><circle cx="10.800" cy="10.800" r="1.500" fill="#c8f2e0"/><circle cx="7.500" cy="7.500" r="1.800" fill="#c8f2e0"/></svg>
<!-- powerpoint -->
<svg class="abs" style="left:449px;top:6px" width="15" height="13" viewBox="0 0 15 13"><rect x="6" y="1" width="8.500" height="11" fill="#fbe4dc" stroke="#d24a26" stroke-width="0.800"/><rect x="9.500" y="3" width="4" height="3" fill="#d24a26"/><path d="M9.500 8h4M9.500 10h4" stroke="#d24a26" stroke-width="0.800"/><rect width="9" height="13" fill="#d9502c"/><text x="4.500" y="10" font-size="8.500" font-weight="bold" fill="#fff" text-anchor="middle" font-family="Liberation Sans,sans-serif">P</text></svg>
<!-- photoshop -->
<svg class="abs" style="left:481px;top:5px" width="15" height="14" viewBox="0 0 15 14"><rect x="0.500" y="0.500" width="14" height="13" fill="#0c1250" stroke="#8db4f5" stroke-width="1"/><text x="7.500" y="10.300" font-size="8" font-weight="bold" fill="#9cc2ff" text-anchor="middle" font-family="Liberation Sans,sans-serif">Ps</text></svg>
<!-- tray -->
<svg class="abs" style="left:612px;top:9px" width="10" height="7" viewBox="0 0 10 7"><path d="M1 5.500L5 1.500L9 5.500" fill="none" stroke="#f2f2f2" stroke-width="1.100"/></svg>
<svg class="abs" style="left:627px;top:7px" width="13" height="12" viewBox="0 0 13 12"><path d="M3 8.500 a2.500 2.500 0 0 1 0.500-4.900 a3.300 3.300 0 0 1 6.200 0.600 a2.200 2.200 0 0 1 0.300 4.300z" fill="#1f8ee6"/><circle cx="8.500" cy="8.300" r="3" fill="#dff0ff" stroke="#1f6fc0" stroke-width="0.800"/><path d="M7 8.300h3M8.800 7l1.300 1.300-1.300 1.300" stroke="#1f6fc0" stroke-width="0.700" fill="none"/></svg>
<svg class="abs" style="left:643px;top:8px" width="12" height="9" viewBox="0 0 12 9"><rect x="2" y="2" width="9.500" height="5" fill="none" stroke="#f2f2f2" stroke-width="1"/><rect x="3.500" y="3.500" width="6.500" height="2" fill="#f2f2f2"/><path d="M0.500 0v4M0.500 1h2" stroke="#f2f2f2" stroke-width="1"/><rect x="1" y="3.500" width="1" height="2" fill="#f2f2f2"/></svg>
<svg class="abs" style="left:660px;top:7px" width="11" height="11" viewBox="0 0 11 11"><path d="M1.500 10.500 A8 8 0 0 1 9.500 2.500" fill="none" stroke="#d9d9d9" stroke-width="1"/><path d="M4 10.500 A5.500 5.500 0 0 1 9.500 5" fill="none" stroke="#d9d9d9" stroke-width="1"/><path d="M6.500 10.500 A3 3 0 0 1 9.500 7.500" fill="none" stroke="#d9d9d9" stroke-width="1"/><circle cx="9" cy="10" r="0.900" fill="#d9d9d9"/></svg>
<svg class="abs" style="left:674px;top:7px" width="12" height="11" viewBox="0 0 12 11"><path d="M0.500 3.800h2l3-2.800v9l-3-2.800h-2z" fill="none" stroke="#f2f2f2" stroke-width="0.900"/><path d="M7 3.500a3 3 0 0 1 0 4M8.800 2a5 5 0 0 1 0 7M10.500 0.800a7 7 0 0 1 0 9.400" fill="none" stroke="#cfcfcf" stroke-width="0.800"/></svg>
<svg class="abs" style="left:690px;top:8px" width="12" height="9" viewBox="0 0 12 9"><path d="M3 8.500 a2.700 2.700 0 0 1 0.300-5.300 a3.300 3.300 0 0 1 6.200 0.600 a2.300 2.300 0 0 1 -0.200 4.700z" fill="#f4f4f4"/><path d="M6 7.300V4M4.400 5.300L6 3.600 7.600 5.300" stroke="#1b2a47" stroke-width="1" fill="none"/></svg>
<svg class="abs" style="left:705px;top:8px" width="12" height="9" viewBox="0 0 12 9"><path d="M3 8.500 a2.700 2.700 0 0 1 0.300-5.300 a3.300 3.300 0 0 1 6.200 0.600 a2.300 2.300 0 0 1 -0.200 4.700z" fill="#f4f4f4"/><path d="M6 7.300V4M4.400 5.300L6 3.600 7.600 5.300" stroke="#1b2a47" stroke-width="1" fill="none"/></svg>
<span class="abs" style="left:724px;top:7px;font-size:8.400px;line-height:11px;color:#f2f2f2;letter-spacing:-0.200px">TUR</span>
<span class="abs" style="left:747px;top:12px;font-size:8px;line-height:11px;color:#f2f2f2">2</span>
</div>

</div>
</body></html>
